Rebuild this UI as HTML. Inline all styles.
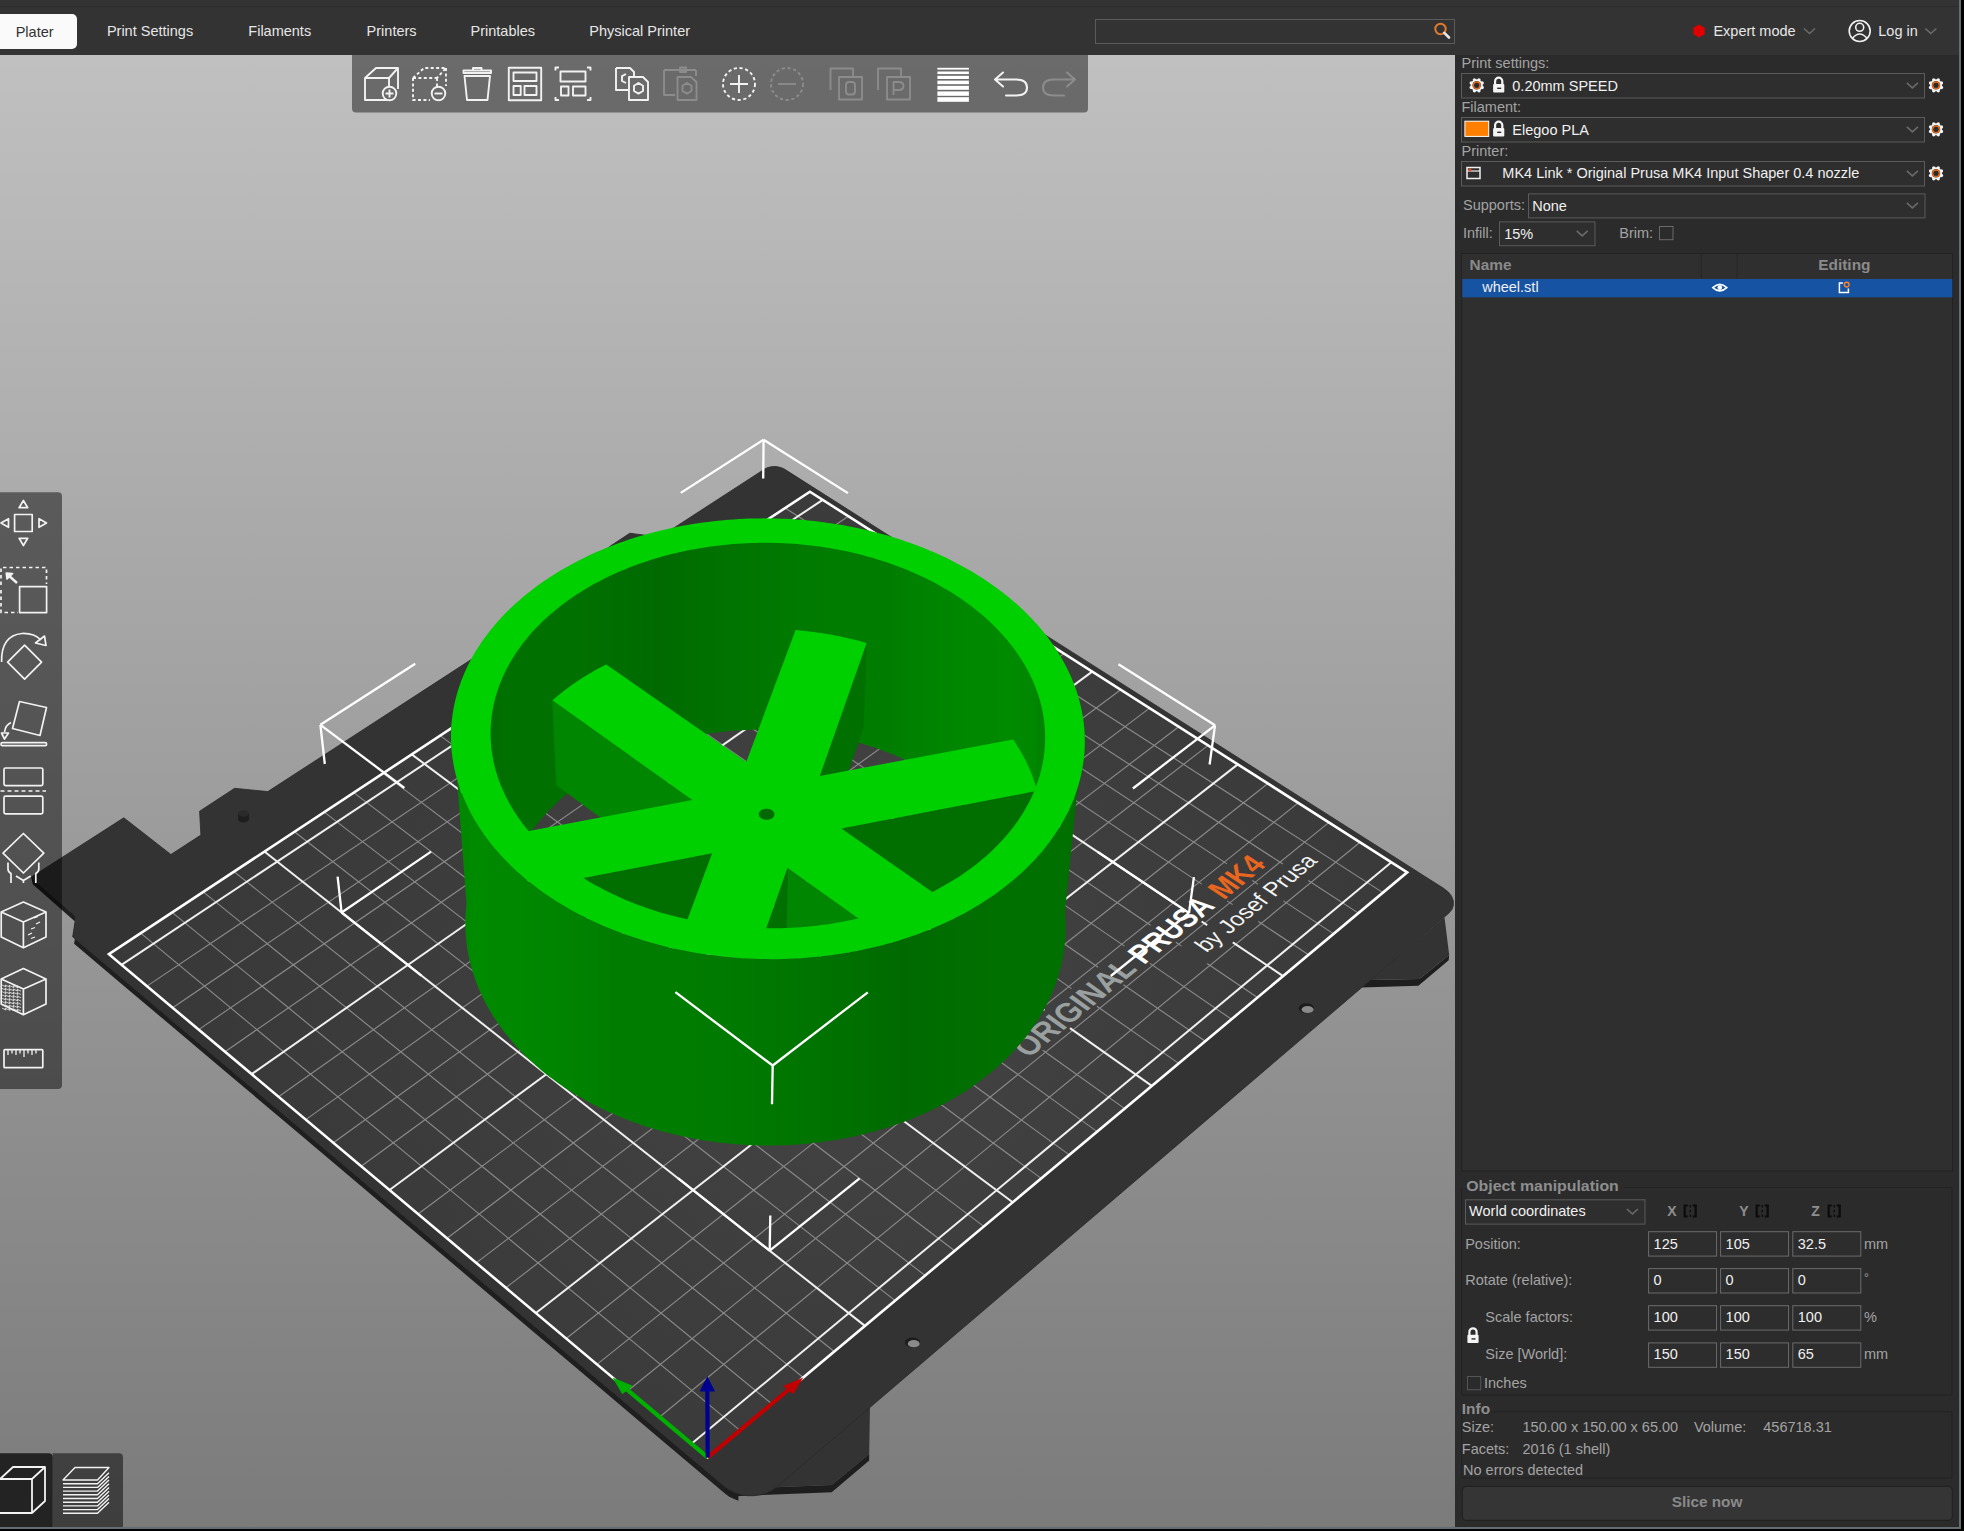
<!DOCTYPE html>
<html><head><meta charset="utf-8"><style>
html,body{margin:0;padding:0}
body{width:1964px;height:1531px;overflow:hidden;position:relative;background:#2b2b2b;font-family:"Liberation Sans",sans-serif}
</style></head><body>
<svg width="1455" height="1472" viewBox="0 55 1455 1472" style="position:absolute;left:0;top:55px">
<defs><linearGradient id="bg" x1="0" y1="0" x2="0" y2="1"><stop offset="0" stop-color="#c0c0c0"/><stop offset="1" stop-color="#7b7b7b"/></linearGradient></defs>
<rect x="0" y="55" width="1455" height="1472" fill="url(#bg)"/>
<polygon points="1361,987.4 1418.4,985.8 1448.7,960.2 1449.2,955 1419.4,979 1370.3,980" fill="#1e1e1e"/>
<polygon points="1444.5,917.3 1449.2,955 1419.4,979 1370.3,980 1360.9,987.7" fill="#333333"/>
<polygon points="870,1405.2 869.2,1454 831.7,1485 729.1,1489.1 735,1475 790,1440" fill="#333333"/>
<polygon points="31.2,877.2 75.9,916.5 72.7,936.7 72.7,936.7 125.0,980.8 178.6,1025.9 233.4,1072.2 289.6,1119.6 347.2,1168.1 406.2,1217.9 466.7,1268.9 528.7,1321.2 592.4,1374.9 657.8,1430.1 724.9,1486.6 724.9,1486.6 729.0,1489.6 733.5,1492.0 738.4,1493.9 738.4,1500.7 733.5,1498.8 728.9,1496.4 724.9,1493.4 724.9,1493.4 657.9,1436.9 592.7,1381.8 529.2,1328.2 467.3,1275.9 406.9,1224.9 348.0,1175.1 290.6,1126.6 234.5,1079.2 179.8,1033.0 126.3,987.9 74.1,943.8 74.1,943.8 77.3,923.6 32.7,884.3" fill="#1f1f1f"/>
<polygon points="729.1,1496.4 831.7,1492.3 869.2,1460.6 869.2,1454 831.7,1485 729.1,1489.1" fill="#1e1e1e"/>
<polygon points="724.9,1486.6 729.8,1490.1 735.4,1492.9 741.5,1494.7 747.8,1495.7 754.3,1495.7 760.6,1494.7 766.6,1492.9 772.2,1490.2 777.1,1486.7 1448.8,913.2 1451.9,909.5 1453.4,905.3 1453.3,900.8 1451.6,896.3 1448.4,892.1 1443.9,888.5 784.4,469.1 780.8,467.5 776.6,466.6 772.2,466.6 768.0,467.5 764.5,469.1 658.8,537.7 644.9,535.2 629.8,533.2 608.8,547.1 618.7,563.8 267.8,791.6 234.6,788.3 199.6,811.2 200.9,835.0 170.9,854.5 123.8,817.8 31.2,877.2 75.9,916.5 72.7,936.7" fill="#333333" stroke="#2a2a2a" stroke-width="0.8"/>
<defs><radialGradient id="pag" gradientUnits="userSpaceOnUse" cx="830" cy="980" r="620"><stop offset="0" stop-color="#454545"/><stop offset="0.55" stop-color="#3d3d3d"/><stop offset="1" stop-color="#393939"/></radialGradient></defs>
<polygon points="707.7,1457.4 1407.2,872.3 809.9,491.7 108.9,954.2" fill="url(#pag)"/>
<g><line x1="739.9" y1="1430.4" x2="140.7" y2="933.2" stroke="#8c8c8c" stroke-width="1.10"/><line x1="771.7" y1="1403.8" x2="172.1" y2="912.4" stroke="#8c8c8c" stroke-width="1.10"/><line x1="803.2" y1="1377.5" x2="203.2" y2="891.9" stroke="#8c8c8c" stroke-width="1.10"/><line x1="834.2" y1="1351.5" x2="234.0" y2="871.6" stroke="#8c8c8c" stroke-width="1.10"/><line x1="895.2" y1="1300.6" x2="294.5" y2="831.7" stroke="#8c8c8c" stroke-width="1.10"/><line x1="925.1" y1="1275.5" x2="324.3" y2="812.1" stroke="#8c8c8c" stroke-width="1.10"/><line x1="954.6" y1="1250.8" x2="353.7" y2="792.6" stroke="#8c8c8c" stroke-width="1.10"/><line x1="983.8" y1="1226.4" x2="382.9" y2="773.4" stroke="#8c8c8c" stroke-width="1.10"/><line x1="1041.2" y1="1178.4" x2="440.2" y2="735.6" stroke="#8c8c8c" stroke-width="1.10"/><line x1="1069.3" y1="1154.9" x2="468.4" y2="717.0" stroke="#8c8c8c" stroke-width="1.10"/><line x1="1097.2" y1="1131.6" x2="496.3" y2="698.6" stroke="#8c8c8c" stroke-width="1.10"/><line x1="1124.7" y1="1108.6" x2="1042.7" y2="1050.2" stroke="#8c8c8c" stroke-width="1.10"/><line x1="1017.3" y1="1032.0" x2="524.0" y2="680.3" stroke="#8c8c8c" stroke-width="1.10"/><line x1="1178.7" y1="1063.4" x2="1096.9" y2="1006.3" stroke="#8c8c8c" stroke-width="1.10"/><line x1="1071.5" y1="988.6" x2="578.4" y2="644.4" stroke="#8c8c8c" stroke-width="1.10"/><line x1="1205.3" y1="1041.2" x2="1123.5" y2="984.7" stroke="#8c8c8c" stroke-width="1.10"/><line x1="1098.1" y1="967.2" x2="605.2" y2="626.8" stroke="#8c8c8c" stroke-width="1.10"/><line x1="1231.5" y1="1019.2" x2="1149.9" y2="963.4" stroke="#8c8c8c" stroke-width="1.10"/><line x1="1124.5" y1="946.1" x2="631.7" y2="609.3" stroke="#8c8c8c" stroke-width="1.10"/><line x1="1257.5" y1="997.5" x2="1207.1" y2="963.5" stroke="#8c8c8c" stroke-width="1.10"/><line x1="1150.6" y1="925.2" x2="657.9" y2="592.0" stroke="#8c8c8c" stroke-width="1.10"/><line x1="1181.5" y1="946.1" x2="1175.9" y2="942.3" stroke="#8c8c8c" stroke-width="1.10"/><line x1="1308.5" y1="954.8" x2="1258.3" y2="921.5" stroke="#8c8c8c" stroke-width="1.10"/><line x1="1201.8" y1="884.1" x2="709.6" y2="557.9" stroke="#8c8c8c" stroke-width="1.10"/><line x1="1232.7" y1="904.6" x2="1227.1" y2="900.9" stroke="#8c8c8c" stroke-width="1.10"/><line x1="1333.6" y1="933.9" x2="1283.4" y2="900.9" stroke="#8c8c8c" stroke-width="1.10"/><line x1="1227.0" y1="863.9" x2="735.0" y2="541.1" stroke="#8c8c8c" stroke-width="1.10"/><line x1="1257.9" y1="884.2" x2="1252.3" y2="880.5" stroke="#8c8c8c" stroke-width="1.10"/><line x1="1358.4" y1="913.1" x2="1308.3" y2="880.5" stroke="#8c8c8c" stroke-width="1.10"/><line x1="1282.8" y1="864.0" x2="760.2" y2="524.5" stroke="#8c8c8c" stroke-width="1.10"/><line x1="1382.9" y1="892.6" x2="785.2" y2="508.0" stroke="#8c8c8c" stroke-width="1.10"/><line x1="659.6" y1="1417.0" x2="1360.0" y2="842.2" stroke="#8c8c8c" stroke-width="1.10"/><line x1="628.1" y1="1390.5" x2="1329.0" y2="822.4" stroke="#8c8c8c" stroke-width="1.10"/><line x1="597.0" y1="1364.4" x2="1298.2" y2="802.9" stroke="#8c8c8c" stroke-width="1.10"/><line x1="566.2" y1="1338.5" x2="1267.9" y2="783.5" stroke="#8c8c8c" stroke-width="1.10"/><line x1="505.9" y1="1287.8" x2="1208.1" y2="745.4" stroke="#8c8c8c" stroke-width="1.10"/><line x1="476.2" y1="1262.9" x2="1178.7" y2="726.7" stroke="#8c8c8c" stroke-width="1.10"/><line x1="447.0" y1="1238.3" x2="1149.6" y2="708.1" stroke="#8c8c8c" stroke-width="1.10"/><line x1="418.1" y1="1214.0" x2="1120.7" y2="689.8" stroke="#8c8c8c" stroke-width="1.10"/><line x1="361.2" y1="1166.3" x2="1064.0" y2="653.6" stroke="#8c8c8c" stroke-width="1.10"/><line x1="333.3" y1="1142.8" x2="1036.1" y2="635.9" stroke="#8c8c8c" stroke-width="1.10"/><line x1="305.8" y1="1119.6" x2="1008.5" y2="618.3" stroke="#8c8c8c" stroke-width="1.10"/><line x1="278.5" y1="1096.7" x2="981.1" y2="600.8" stroke="#8c8c8c" stroke-width="1.10"/><line x1="225.0" y1="1051.7" x2="927.2" y2="566.5" stroke="#8c8c8c" stroke-width="1.10"/><line x1="198.7" y1="1029.6" x2="900.7" y2="549.6" stroke="#8c8c8c" stroke-width="1.10"/><line x1="172.6" y1="1007.7" x2="874.4" y2="532.8" stroke="#8c8c8c" stroke-width="1.10"/><line x1="146.9" y1="986.1" x2="848.4" y2="516.3" stroke="#8c8c8c" stroke-width="1.10"/></g>
<g><line x1="864.9" y1="1325.9" x2="264.4" y2="851.5" stroke="#f0f0f0" stroke-width="2.00"/><line x1="1012.7" y1="1202.3" x2="411.7" y2="754.4" stroke="#f0f0f0" stroke-width="2.00"/><line x1="1151.8" y1="1085.9" x2="1070.0" y2="1028.1" stroke="#f0f0f0" stroke-width="2.00"/><line x1="1044.5" y1="1010.2" x2="551.3" y2="662.3" stroke="#f0f0f0" stroke-width="2.00"/><line x1="1283.1" y1="976.1" x2="1232.8" y2="942.4" stroke="#f0f0f0" stroke-width="2.00"/><line x1="1176.3" y1="904.6" x2="683.9" y2="574.9" stroke="#f0f0f0" stroke-width="2.00"/><line x1="1207.2" y1="925.2" x2="1201.6" y2="921.5" stroke="#f0f0f0" stroke-width="2.00"/><line x1="691.5" y1="1443.8" x2="1391.4" y2="862.2" stroke="#f0f0f0" stroke-width="2.00"/><line x1="535.9" y1="1313.0" x2="1237.8" y2="764.4" stroke="#f0f0f0" stroke-width="2.00"/><line x1="389.5" y1="1190.0" x2="1092.2" y2="671.6" stroke="#f0f0f0" stroke-width="2.00"/><line x1="251.6" y1="1074.1" x2="954.0" y2="583.6" stroke="#f0f0f0" stroke-width="2.00"/><line x1="121.5" y1="964.8" x2="822.7" y2="499.9" stroke="#f0f0f0" stroke-width="2.00"/></g>
<polygon points="707.7,1457.4 1407.2,872.3 809.9,491.7 108.9,954.2" fill="none" stroke="#ffffff" stroke-width="2.6" stroke-linejoin="miter"/>
<g transform="matrix(2.7532,-2.2272,3.1170,2.2330,1028.44,1058.41)"><text x="0" y="0" font-size="8.50" font-weight="bold" fill="#9aa09f" textLength="39.90" lengthAdjust="spacingAndGlyphs">ORIGINAL</text></g>
<g transform="matrix(2.6212,-2.1204,3.1065,2.1260,1144.02,964.91)"><text x="0" y="0" font-size="8.50" font-weight="bold" fill="#ffffff" textLength="27.50" lengthAdjust="spacingAndGlyphs">PRUSA</text></g>
<g transform="matrix(2.5318,-2.0481,3.0973,2.0536,1223.92,900.27)"><text x="0" y="0" font-size="8.50" font-weight="bold" fill="#e8661f" textLength="17.10" lengthAdjust="spacingAndGlyphs">MK4</text></g>
<g transform="matrix(2.5777,-2.1071,3.1319,2.1127,1206.62,953.09)"><text x="0" y="0" font-size="6.20" font-weight="normal" fill="#f4f4f4" textLength="43.40" lengthAdjust="spacingAndGlyphs">by Josef Prusa</text></g>
<ellipse cx="243.5" cy="819" rx="5.5" ry="3.4" fill="#1e1e1e"/><rect x="238" y="813.5" width="11" height="5.5" fill="#1e1e1e"/><ellipse cx="243.5" cy="813.5" rx="5.5" ry="3.2" fill="#2a2a2a"/>
<ellipse cx="1306.4" cy="1008.3" rx="7.6" ry="5" fill="#1c1c1c"/><ellipse cx="1307.6" cy="1009.5" rx="6" ry="3.6" fill="#8a8a8a"/>
<ellipse cx="912.5" cy="1342.5" rx="7.6" ry="5" fill="#1c1c1c"/><ellipse cx="913.7" cy="1343.7" rx="6" ry="3.6" fill="#8a8a8a"/>
<line x1="707.7" y1="1457.4" x2="625.0" y2="1387.9" stroke="#00b000" stroke-width="4.20"/>
<polygon points="612.5,1377.4 622.3,1394.2 632.7,1385.8" fill="#00b000"/>
<line x1="707.7" y1="1457.4" x2="790.6" y2="1388.0" stroke="#c00000" stroke-width="4.20"/>
<polygon points="803.2,1377.5 793.3,1394.3 783.0,1385.9" fill="#c00000"/>
<line x1="707.7" y1="1457.4" x2="707.3" y2="1390.1" stroke="#000090" stroke-width="4.20"/>
<polygon points="707.3,1376.2 699.7,1391.4 715.0,1391.5" fill="#000090"/>
<defs><clipPath id="opening"><path d="M955.29,593.63 L951.80,591.44 L948.26,589.29 L944.68,587.19 L941.05,585.12 L937.37,583.10 L933.64,581.13 L929.88,579.19 L926.06,577.31 L922.21,575.47 L918.32,573.67 L914.38,571.92 L910.41,570.21 L906.40,568.56 L902.36,566.95 L898.27,565.38 L894.16,563.87 L890.01,562.40 L885.83,560.98 L881.62,559.61 L877.37,558.29 L873.10,557.02 L868.81,555.80 L864.48,554.63 L860.13,553.51 L855.76,552.44 L851.37,551.41 L846.95,550.45 L842.51,549.53 L838.05,548.66 L833.58,547.84 L829.09,547.08 L824.58,546.37 L820.06,545.71 L815.52,545.10 L810.97,544.54 L806.41,544.04 L801.85,543.59 L797.27,543.19 L792.68,542.84 L788.09,542.55 L783.50,542.31 L778.89,542.12 L774.29,541.99 L769.69,541.90 L765.08,541.87 L760.48,541.90 L755.87,541.97 L751.27,542.10 L746.68,542.29 L742.09,542.52 L737.51,542.81 L732.93,543.15 L728.36,543.54 L723.81,543.99 L719.26,544.49 L714.73,545.04 L710.21,545.64 L705.71,546.29 L701.22,547.00 L696.75,547.76 L692.30,548.57 L687.87,549.43 L683.46,550.34 L679.07,551.31 L674.70,552.32 L670.36,553.39 L666.04,554.50 L661.75,555.67 L657.49,556.89 L653.26,558.15 L649.05,559.47 L644.88,560.83 L640.74,562.25 L636.63,563.71 L632.56,565.22 L628.52,566.78 L624.52,568.38 L620.56,570.03 L616.64,571.73 L612.76,573.48 L608.91,575.27 L605.11,577.11 L601.36,578.99 L597.64,580.92 L593.98,582.89 L590.36,584.91 L586.78,586.97 L583.26,589.07 L579.79,591.21 L576.36,593.40 L572.99,595.63 L569.67,597.90 L566.40,600.21 L563.19,602.56 L560.04,604.95 L556.94,607.37 L553.90,609.84 L550.91,612.34 L547.99,614.88 L545.13,617.46 L542.33,620.07 L539.59,622.72 L536.91,625.40 L534.30,628.12 L531.76,630.87 L529.28,633.65 L526.86,636.46 L524.52,639.30 L522.24,642.18 L520.03,645.08 L517.89,648.01 L515.83,650.97 L513.83,653.96 L511.91,656.98 L510.06,660.01 L508.28,663.08 L506.58,666.17 L504.95,669.28 L503.40,672.41 L501.93,675.57 L500.53,678.74 L499.21,681.94 L497.97,685.15 L496.81,688.39 L495.73,691.64 L494.73,694.90 L493.80,698.18 L492.96,701.48 L492.21,704.79 L491.53,708.11 L490.94,711.44 L490.43,714.78 L490.00,718.14 L489.65,721.50 L489.39,724.87 L489.22,728.24 L489.13,731.62 L489.12,735.01 L489.20,738.39 L489.37,741.78 L489.62,745.18 L489.95,748.57 L490.38,751.96 L490.88,755.35 L491.48,758.74 L492.16,762.12 L492.93,765.50 L493.78,768.87 L494.72,772.24 L495.74,775.59 L496.85,778.94 L498.05,782.28 L499.33,785.60 L500.70,788.92 L502.16,792.22 L503.70,795.50 L505.32,798.77 L507.03,802.02 L508.82,805.25 L510.70,808.47 L512.66,811.66 L514.70,814.83 L516.83,817.98 L519.04,821.11 L521.33,824.21 L523.70,827.28 L526.15,830.33 L528.68,833.35 L531.30,836.35 L533.99,839.31 L536.75,842.24 L539.60,845.13 L542.52,848.00 L545.52,850.83 L548.59,853.63 L551.74,856.38 L554.95,859.11 L558.25,861.79 L561.61,864.43 L565.04,867.03 L568.54,869.60 L572.11,872.12 L575.75,874.59 L579.45,877.02 L583.22,879.41 L587.05,881.75 L590.94,884.05 L594.89,886.29 L598.91,888.49 L602.98,890.64 L607.11,892.73 L611.29,894.78 L615.53,896.77 L619.83,898.71 L624.17,900.60 L628.57,902.44 L633.01,904.21 L637.50,905.94 L642.04,907.60 L646.62,909.21 L651.25,910.76 L655.91,912.26 L660.62,913.69 L665.36,915.07 L670.14,916.38 L674.95,917.64 L679.80,918.83 L684.68,919.96 L689.58,921.03 L694.52,922.04 L699.48,922.98 L704.47,923.86 L709.48,924.68 L714.51,925.44 L719.55,926.13 L724.62,926.75 L729.70,927.31 L734.80,927.81 L739.90,928.23 L745.02,928.60 L750.15,928.90 L755.28,929.13 L760.41,929.30 L765.55,929.40 L770.69,929.44 L775.83,929.41 L780.97,929.31 L786.10,929.15 L791.22,928.92 L796.34,928.63 L801.45,928.27 L806.54,927.85 L811.62,927.36 L816.69,926.80 L821.73,926.18 L826.76,925.50 L831.77,924.75 L836.75,923.94 L841.71,923.06 L846.65,922.13 L851.56,921.12 L856.43,920.06 L861.28,918.93 L866.09,917.75 L870.87,916.50 L875.61,915.19 L880.31,913.82 L884.97,912.39 L889.60,910.90 L894.17,909.36 L898.71,907.75 L903.20,906.09 L907.64,904.37 L912.03,902.60 L916.37,900.77 L920.66,898.89 L924.90,896.95 L929.08,894.96 L933.21,892.92 L937.28,890.83 L941.29,888.69 L945.24,886.49 L949.13,884.25 L952.95,881.96 L956.71,879.63 L960.41,877.24 L964.04,874.82 L967.61,872.34 L971.10,869.83 L974.53,867.27 L977.89,864.67 L981.17,862.03 L984.38,859.35 L987.52,856.64 L990.59,853.88 L993.58,851.09 L996.50,848.26 L999.33,845.40 L1002.09,842.51 L1004.78,839.58 L1007.38,836.62 L1009.91,833.63 L1012.35,830.62 L1014.71,827.57 L1017.00,824.50 L1019.20,821.40 L1021.31,818.28 L1023.35,815.13 L1025.30,811.96 L1027.17,808.77 L1028.95,805.56 L1030.65,802.33 L1032.27,799.08 L1033.80,795.81 L1035.24,792.53 L1036.60,789.23 L1037.87,785.92 L1039.06,782.60 L1040.16,779.26 L1041.17,775.92 L1042.10,772.56 L1042.94,769.20 L1043.70,765.83 L1044.36,762.45 L1044.95,759.07 L1045.44,755.68 L1045.85,752.29 L1046.18,748.90 L1046.42,745.51 L1046.57,742.12 L1046.63,738.73 L1046.62,735.34 L1046.51,731.95 L1046.32,728.57 L1046.05,725.20 L1045.69,721.83 L1045.25,718.47 L1044.73,715.12 L1044.12,711.77 L1043.43,708.44 L1042.66,705.12 L1041.80,701.81 L1040.87,698.51 L1039.85,695.23 L1038.76,691.96 L1037.58,688.71 L1036.33,685.48 L1034.99,682.26 L1033.58,679.07 L1032.09,675.89 L1030.53,672.73 L1028.89,669.60 L1027.17,666.48 L1025.38,663.39 L1023.51,660.33 L1021.58,657.28 L1019.57,654.27 L1017.48,651.28 L1015.33,648.32 L1013.11,645.38 L1010.82,642.47 L1008.46,639.60 L1006.03,636.75 L1003.53,633.94 L1000.97,631.15 L998.35,628.40 L995.66,625.68 L992.90,623.00 L990.09,620.35 L987.21,617.73 L984.28,615.15 L981.28,612.61 L978.22,610.10 L975.11,607.63 L971.94,605.20 L968.72,602.81 L965.44,600.45 L962.11,598.14 L958.72,595.87Z"/></clipPath><linearGradient id="gin" gradientUnits="userSpaceOnUse" x1="496.0" y1="0" x2="1037.5" y2="0"><stop offset="0.0000" stop-color="#006d00"/><stop offset="0.0014" stop-color="#006d00"/><stop offset="0.0034" stop-color="#006e00"/><stop offset="0.0061" stop-color="#006e00"/><stop offset="0.0093" stop-color="#006f00"/><stop offset="0.0131" stop-color="#006f00"/><stop offset="0.0175" stop-color="#007000"/><stop offset="0.0225" stop-color="#007000"/><stop offset="0.0280" stop-color="#007000"/><stop offset="0.0342" stop-color="#007100"/><stop offset="0.0408" stop-color="#007100"/><stop offset="0.0480" stop-color="#007100"/><stop offset="0.0557" stop-color="#007100"/><stop offset="0.0639" stop-color="#007100"/><stop offset="0.0727" stop-color="#007100"/><stop offset="0.0819" stop-color="#007100"/><stop offset="0.0916" stop-color="#007100"/><stop offset="0.1018" stop-color="#007100"/><stop offset="0.1124" stop-color="#007100"/><stop offset="0.1234" stop-color="#007000"/><stop offset="0.1349" stop-color="#007000"/><stop offset="0.1468" stop-color="#007000"/><stop offset="0.1590" stop-color="#007000"/><stop offset="0.1717" stop-color="#006f00"/><stop offset="0.1847" stop-color="#006f00"/><stop offset="0.1980" stop-color="#006e00"/><stop offset="0.2117" stop-color="#006e00"/><stop offset="0.2257" stop-color="#006d00"/><stop offset="0.2400" stop-color="#006d00"/><stop offset="0.2546" stop-color="#006c00"/><stop offset="0.2694" stop-color="#006b00"/><stop offset="0.2845" stop-color="#006b00"/><stop offset="0.2999" stop-color="#006a00"/><stop offset="0.3154" stop-color="#006b00"/><stop offset="0.3311" stop-color="#006c00"/><stop offset="0.3470" stop-color="#006d00"/><stop offset="0.3631" stop-color="#006f00"/><stop offset="0.3793" stop-color="#007000"/><stop offset="0.3957" stop-color="#007100"/><stop offset="0.4121" stop-color="#007200"/><stop offset="0.4287" stop-color="#007300"/><stop offset="0.4453" stop-color="#007400"/><stop offset="0.4620" stop-color="#007500"/><stop offset="0.4787" stop-color="#007600"/><stop offset="0.4955" stop-color="#007700"/><stop offset="0.5123" stop-color="#007800"/><stop offset="0.5290" stop-color="#007900"/><stop offset="0.5457" stop-color="#007900"/><stop offset="0.5624" stop-color="#007a00"/><stop offset="0.5790" stop-color="#007a00"/><stop offset="0.5955" stop-color="#007b00"/><stop offset="0.6119" stop-color="#007c00"/><stop offset="0.6282" stop-color="#007c00"/><stop offset="0.6443" stop-color="#007c00"/><stop offset="0.6603" stop-color="#007d00"/><stop offset="0.6762" stop-color="#007d00"/><stop offset="0.6918" stop-color="#007d00"/><stop offset="0.7073" stop-color="#007d00"/><stop offset="0.7225" stop-color="#007d00"/><stop offset="0.7375" stop-color="#007e00"/><stop offset="0.7522" stop-color="#007f00"/><stop offset="0.7666" stop-color="#008100"/><stop offset="0.7808" stop-color="#008200"/><stop offset="0.7946" stop-color="#008300"/><stop offset="0.8082" stop-color="#008400"/><stop offset="0.8214" stop-color="#008500"/><stop offset="0.8342" stop-color="#008500"/><stop offset="0.8467" stop-color="#008600"/><stop offset="0.8587" stop-color="#008700"/><stop offset="0.8704" stop-color="#008800"/><stop offset="0.8817" stop-color="#008800"/><stop offset="0.8925" stop-color="#008900"/><stop offset="0.9029" stop-color="#008900"/><stop offset="0.9129" stop-color="#008900"/><stop offset="0.9223" stop-color="#008900"/><stop offset="0.9313" stop-color="#008a00"/><stop offset="0.9398" stop-color="#008a00"/><stop offset="0.9478" stop-color="#008a00"/><stop offset="0.9552" stop-color="#008a00"/><stop offset="0.9622" stop-color="#008a00"/><stop offset="0.9685" stop-color="#008900"/><stop offset="0.9744" stop-color="#008900"/><stop offset="0.9796" stop-color="#008900"/><stop offset="0.9843" stop-color="#008800"/><stop offset="0.9884" stop-color="#008800"/><stop offset="0.9920" stop-color="#008700"/><stop offset="0.9949" stop-color="#008700"/><stop offset="0.9972" stop-color="#008600"/><stop offset="0.9989" stop-color="#008500"/><stop offset="1.0000" stop-color="#008400"/></linearGradient><linearGradient id="gout" gradientUnits="userSpaceOnUse" x1="458.4" y1="0" x2="1074.9" y2="0"><stop offset="0.0000" stop-color="#008600"/><stop offset="0.0003" stop-color="#008500"/><stop offset="0.0003" stop-color="#008700"/><stop offset="0.0012" stop-color="#008400"/><stop offset="0.0013" stop-color="#008700"/><stop offset="0.0029" stop-color="#008800"/><stop offset="0.0051" stop-color="#008800"/><stop offset="0.0079" stop-color="#008900"/><stop offset="0.0114" stop-color="#008900"/><stop offset="0.0155" stop-color="#008900"/><stop offset="0.0203" stop-color="#008a00"/><stop offset="0.0257" stop-color="#008a00"/><stop offset="0.0317" stop-color="#008a00"/><stop offset="0.0383" stop-color="#008a00"/><stop offset="0.0456" stop-color="#008a00"/><stop offset="0.0535" stop-color="#008900"/><stop offset="0.0619" stop-color="#008900"/><stop offset="0.0710" stop-color="#008900"/><stop offset="0.0806" stop-color="#008900"/><stop offset="0.0909" stop-color="#008800"/><stop offset="0.1017" stop-color="#008800"/><stop offset="0.1130" stop-color="#008700"/><stop offset="0.1249" stop-color="#008600"/><stop offset="0.1373" stop-color="#008500"/><stop offset="0.1502" stop-color="#008500"/><stop offset="0.1637" stop-color="#008400"/><stop offset="0.1776" stop-color="#008300"/><stop offset="0.1919" stop-color="#008200"/><stop offset="0.2067" stop-color="#008100"/><stop offset="0.2220" stop-color="#007f00"/><stop offset="0.2376" stop-color="#007e00"/><stop offset="0.2536" stop-color="#007d00"/><stop offset="0.2700" stop-color="#007d00"/><stop offset="0.2867" stop-color="#007d00"/><stop offset="0.3037" stop-color="#007d00"/><stop offset="0.3210" stop-color="#007d00"/><stop offset="0.3386" stop-color="#007c00"/><stop offset="0.3564" stop-color="#007c00"/><stop offset="0.3744" stop-color="#007c00"/><stop offset="0.3926" stop-color="#007b00"/><stop offset="0.4110" stop-color="#007a00"/><stop offset="0.4295" stop-color="#007a00"/><stop offset="0.4481" stop-color="#007900"/><stop offset="0.4668" stop-color="#007900"/><stop offset="0.4855" stop-color="#007800"/><stop offset="0.5042" stop-color="#007700"/><stop offset="0.5230" stop-color="#007600"/><stop offset="0.5417" stop-color="#007500"/><stop offset="0.5604" stop-color="#007400"/><stop offset="0.5789" stop-color="#007300"/><stop offset="0.5974" stop-color="#007200"/><stop offset="0.6157" stop-color="#007100"/><stop offset="0.6338" stop-color="#007000"/><stop offset="0.6517" stop-color="#006f00"/><stop offset="0.6694" stop-color="#006d00"/><stop offset="0.6869" stop-color="#006c00"/><stop offset="0.7041" stop-color="#006b00"/><stop offset="0.7210" stop-color="#006a00"/><stop offset="0.7375" stop-color="#006b00"/><stop offset="0.7538" stop-color="#006b00"/><stop offset="0.7696" stop-color="#006c00"/><stop offset="0.7851" stop-color="#006d00"/><stop offset="0.8001" stop-color="#006d00"/><stop offset="0.8147" stop-color="#006e00"/><stop offset="0.8289" stop-color="#006e00"/><stop offset="0.8426" stop-color="#006f00"/><stop offset="0.8558" stop-color="#006f00"/><stop offset="0.8685" stop-color="#007000"/><stop offset="0.8807" stop-color="#007000"/><stop offset="0.8923" stop-color="#007000"/><stop offset="0.9034" stop-color="#007000"/><stop offset="0.9140" stop-color="#007100"/><stop offset="0.9240" stop-color="#007100"/><stop offset="0.9334" stop-color="#007100"/><stop offset="0.9422" stop-color="#007100"/><stop offset="0.9504" stop-color="#007100"/><stop offset="0.9579" stop-color="#007100"/><stop offset="0.9649" stop-color="#007100"/><stop offset="0.9713" stop-color="#007100"/><stop offset="0.9770" stop-color="#007100"/><stop offset="0.9821" stop-color="#007100"/><stop offset="0.9865" stop-color="#007000"/><stop offset="0.9904" stop-color="#007000"/><stop offset="0.9936" stop-color="#007000"/><stop offset="0.9961" stop-color="#006f00"/><stop offset="0.9980" stop-color="#006f00"/><stop offset="0.9993" stop-color="#006e00"/><stop offset="0.9994" stop-color="#006d00"/><stop offset="1.0000" stop-color="#006e00"/><stop offset="1.0000" stop-color="#006d00"/></linearGradient></defs>
<g clip-path="url(#opening)">
<path d="M1046.92,735.52 L1046.90,732.35 L1046.80,729.19 L1046.64,726.04 L1046.40,722.89 L1046.08,719.74 L1045.70,716.60 L1045.24,713.47 L1044.70,710.35 L1044.10,707.23 L1043.42,704.12 L1042.67,701.03 L1041.85,697.94 L1040.96,694.87 L1040.00,691.81 L1038.97,688.76 L1037.87,685.73 L1036.70,682.71 L1035.47,679.70 L1034.16,676.72 L1032.79,673.75 L1031.35,670.79 L1029.85,667.86 L1028.27,664.94 L1026.64,662.05 L1024.93,659.17 L1023.17,656.32 L1021.34,653.49 L1019.45,650.68 L1017.49,647.89 L1015.48,645.13 L1013.40,642.39 L1011.26,639.68 L1009.06,636.99 L1006.81,634.33 L1004.49,631.69 L1002.12,629.09 L999.69,626.51 L997.21,623.95 L994.66,621.43 L992.07,618.94 L989.42,616.48 L986.72,614.04 L983.96,611.64 L981.15,609.28 L978.30,606.94 L975.39,604.63 L972.43,602.36 L969.43,600.13 L966.37,597.92 L963.27,595.75 L960.12,593.62 L956.93,591.52 L953.70,589.46 L950.42,587.43 L947.10,585.44 L943.73,583.49 L940.33,581.58 L936.88,579.70 L933.40,577.86 L929.87,576.06 L926.31,574.30 L922.72,572.58 L919.08,570.90 L915.42,569.26 L911.71,567.65 L907.98,566.09 L904.21,564.57 L900.42,563.09 L896.59,561.66 L892.73,560.26 L888.84,558.91 L884.93,557.60 L880.99,556.33 L877.02,555.10 L873.03,553.92 L869.02,552.78 L864.98,551.69 L860.92,550.63 L856.84,549.62 L852.74,548.66 L848.62,547.74 L844.48,546.86 L840.33,546.03 L836.16,545.25 L831.97,544.51 L827.77,543.81 L823.56,543.16 L819.33,542.55 L815.09,541.99 L810.84,541.48 L806.58,541.01 L802.32,540.58 L798.04,540.21 L793.76,539.87 L789.47,539.59 L785.18,539.35 L780.88,539.15 L776.58,539.00 L772.28,538.90 L767.98,538.84 L763.68,538.83 L759.38,538.87 L755.08,538.95 L750.78,539.08 L746.49,539.25 L742.21,539.47 L737.92,539.74 L733.65,540.05 L729.38,540.41 L725.12,540.81 L720.88,541.26 L716.64,541.76 L712.41,542.30 L708.20,542.88 L704.00,543.51 L699.81,544.19 L695.64,544.91 L691.49,545.68 L687.35,546.49 L683.23,547.34 L679.13,548.24 L675.05,549.19 L670.99,550.18 L666.96,551.21 L662.94,552.29 L658.95,553.41 L654.99,554.57 L651.05,555.78 L647.13,557.02 L643.25,558.32 L639.39,559.65 L635.57,561.03 L631.77,562.45 L628.00,563.91 L624.27,565.41 L620.57,566.95 L616.90,568.54 L613.27,570.16 L609.67,571.82 L606.11,573.53 L602.59,575.27 L599.11,577.05 L595.66,578.88 L592.26,580.74 L588.89,582.63 L585.57,584.57 L582.29,586.54 L579.06,588.55 L575.86,590.60 L572.72,592.68 L569.62,594.80 L566.56,596.95 L563.56,599.14 L560.60,601.36 L557.69,603.62 L554.83,605.91 L552.03,608.23 L549.27,610.59 L546.57,612.97 L543.92,615.39 L541.32,617.84 L538.78,620.32 L536.29,622.83 L533.86,625.37 L531.49,627.94 L529.17,630.53 L526.91,633.16 L524.71,635.81 L522.57,638.48 L520.49,641.19 L518.48,643.92 L516.52,646.67 L514.62,649.44 L512.79,652.24 L511.02,655.07 L509.32,657.91 L507.68,660.78 L506.10,663.66 L504.59,666.57 L503.15,669.50 L501.77,672.44 L500.47,675.41 L499.22,678.39 L498.05,681.38 L496.95,684.40 L495.91,687.42 L494.95,690.47 L494.05,693.52 L493.23,696.59 L492.47,699.67 L491.79,702.76 L491.18,705.87 L490.64,708.98 L490.18,712.10 L489.78,715.23 L489.46,718.37 L489.21,721.51 L489.04,724.66 L488.94,727.81 L501.45,918.60 L501.54,915.45 L501.69,912.31 L501.92,909.18 L502.21,906.05 L502.57,902.92 L503.00,899.81 L503.50,896.70 L504.07,893.60 L504.70,890.52 L505.41,887.44 L506.18,884.38 L507.01,881.33 L507.92,878.29 L508.89,875.26 L509.92,872.25 L511.03,869.26 L512.19,866.28 L513.42,863.32 L514.72,860.38 L516.07,857.46 L517.49,854.55 L518.98,851.67 L520.52,848.80 L522.13,845.96 L523.80,843.13 L525.52,840.33 L527.31,837.56 L529.16,834.81 L531.06,832.08 L533.02,829.37 L535.04,826.70 L537.12,824.05 L539.25,821.42 L541.44,818.82 L543.68,816.25 L545.98,813.71 L548.33,811.20 L550.73,808.72 L553.19,806.27 L555.69,803.85 L558.25,801.46 L560.86,799.10 L563.51,796.78 L566.22,794.48 L568.97,792.22 L571.77,790.00 L574.61,787.81 L577.50,785.65 L580.44,783.53 L583.42,781.44 L586.44,779.39 L589.51,777.38 L592.61,775.40 L595.76,773.46 L598.95,771.56 L602.17,769.70 L605.43,767.87 L608.74,766.08 L612.07,764.34 L615.45,762.63 L618.86,760.96 L622.30,759.33 L625.77,757.74 L629.28,756.20 L632.82,754.69 L636.39,753.23 L639.99,751.81 L643.62,750.42 L647.28,749.09 L650.97,747.79 L654.68,746.54 L658.41,745.33 L662.17,744.16 L665.96,743.04 L669.77,741.96 L673.60,740.92 L677.45,739.93 L681.32,738.98 L685.21,738.08 L689.11,737.22 L693.04,736.41 L696.98,735.64 L700.94,734.91 L704.91,734.24 L708.90,733.60 L712.90,733.01 L716.91,732.47 L720.93,731.98 L724.96,731.53 L729.00,731.12 L733.05,730.76 L737.11,730.45 L741.17,730.18 L745.24,729.96 L749.31,729.79 L753.39,729.66 L757.47,729.58 L761.55,729.54 L765.63,729.55 L769.71,729.61 L773.80,729.71 L777.88,729.86 L781.95,730.05 L786.03,730.29 L790.09,730.58 L794.16,730.91 L798.21,731.29 L802.26,731.72 L806.30,732.19 L810.34,732.70 L814.36,733.27 L818.37,733.87 L822.37,734.53 L826.35,735.23 L830.32,735.97 L834.28,736.76 L838.22,737.59 L842.15,738.47 L846.05,739.39 L849.94,740.36 L853.81,741.37 L857.66,742.42 L861.49,743.52 L865.30,744.67 L869.08,745.85 L872.84,747.08 L876.58,748.35 L880.28,749.67 L883.97,751.02 L887.62,752.42 L891.25,753.86 L894.85,755.34 L898.42,756.87 L901.96,758.43 L905.47,760.04 L908.94,761.68 L912.38,763.37 L915.79,765.09 L919.16,766.86 L922.50,768.66 L925.79,770.50 L929.06,772.38 L932.28,774.30 L935.46,776.26 L938.61,778.25 L941.71,780.28 L944.77,782.35 L947.79,784.45 L950.77,786.58 L953.70,788.75 L956.59,790.96 L959.43,793.20 L962.22,795.47 L964.97,797.78 L967.67,800.12 L970.33,802.49 L972.93,804.90 L975.48,807.33 L977.98,809.79 L980.43,812.29 L982.83,814.81 L985.18,817.36 L987.47,819.95 L989.71,822.55 L991.89,825.19 L994.02,827.85 L996.09,830.54 L998.10,833.25 L1000.06,835.99 L1001.96,838.76 L1003.80,841.54 L1005.58,844.35 L1007.30,847.18 L1008.96,850.03 L1010.56,852.91 L1012.10,855.80 L1013.57,858.71 L1014.99,861.65 L1016.34,864.60 L1017.62,867.56 L1018.84,870.55 L1020.00,873.55 L1021.10,876.56 L1022.12,879.59 L1023.08,882.64 L1023.98,885.69 L1024.81,888.76 L1025.57,891.84 L1026.26,894.93 L1026.89,898.03 L1027.45,901.14 L1027.94,904.26 L1028.36,907.39 L1028.71,910.52 L1028.99,913.66 L1029.20,916.80 L1029.35,919.95 L1029.42,923.10 L1029.42,926.25Z" fill="url(#gin)"/>
<path d="M863.25,727.83 L817.47,860.83 L819.84,775.97 L866.63,642.95Z" fill="#007000" stroke="#007000" stroke-width="0.5"/>
<path d="M693.13,884.91 L556.47,785.20 L552.45,700.28 L692.42,800.06Z" fill="#008600" stroke="#008600" stroke-width="0.5"/>
<path d="M1029.42,875.71 L838.40,913.27 L841.33,828.48 L1037.09,790.86Z" fill="#006f00" stroke="#006f00" stroke-width="0.5"/>
<path d="M712.41,938.04 L514.78,976.90 L509.47,892.24 L712.17,853.29Z" fill="#006f00" stroke="#006f00" stroke-width="0.5"/>
<path d="M935.78,1061.94 L785.89,952.58 L787.52,867.86 L941.39,977.56Z" fill="#008600" stroke="#008600" stroke-width="0.5"/>
<path d="M785.89,952.58 L733.96,1103.44 L734.28,1019.23 L787.52,867.86Z" fill="#007000" stroke="#007000" stroke-width="0.5"/>
<path d="M746.25,762.11 L795.60,630.10 L795.81,630.12 L800.32,630.52 L804.84,630.98 L809.34,631.49 L813.83,632.05 L818.31,632.67 L822.77,633.34 L827.22,634.06 L831.66,634.83 L836.07,635.66 L840.47,636.54 L844.86,637.47 L849.22,638.45 L853.56,639.48 L857.87,640.57 L862.17,641.70 L866.43,642.89 L866.63,642.95 L819.84,775.97 L1013.01,739.43 L1013.11,739.57 L1015.16,742.60 L1017.14,745.65 L1019.05,748.73 L1020.89,751.83 L1022.65,754.96 L1024.34,758.11 L1025.96,761.28 L1027.50,764.48 L1028.96,767.70 L1030.35,770.93 L1031.66,774.19 L1032.90,777.46 L1034.05,780.75 L1035.13,784.05 L1036.13,787.37 L1037.05,790.71 L1037.09,790.86 L841.33,828.48 L995.09,935.80 L994.97,935.93 L992.16,938.82 L989.29,941.68 L986.33,944.50 L983.31,947.29 L980.21,950.03 L977.04,952.74 L973.79,955.41 L970.48,958.04 L967.10,960.62 L963.65,963.16 L960.13,965.66 L956.55,968.12 L952.90,970.52 L949.18,972.88 L945.41,975.20 L941.57,977.46 L941.39,977.56 L787.52,867.86 L734.28,1019.23 L734.04,1019.21 L729.02,1018.71 L724.01,1018.14 L719.01,1017.51 L714.04,1016.81 L709.08,1016.05 L704.14,1015.23 L699.22,1014.34 L694.33,1013.38 L689.47,1012.36 L684.63,1011.28 L679.82,1010.14 L675.04,1008.93 L670.29,1007.67 L665.58,1006.34 L660.90,1004.95 L656.26,1003.50 L656.05,1003.43 L712.17,853.29 L509.47,892.24 L509.39,892.09 L507.70,888.80 L506.10,885.50 L504.58,882.17 L503.14,878.84 L501.79,875.49 L500.52,872.13 L499.34,868.75 L498.24,865.37 L497.22,861.97 L496.30,858.57 L495.45,855.16 L494.69,851.74 L494.02,848.32 L493.43,844.89 L492.93,841.46 L492.51,838.03 L492.49,837.87 L692.42,800.06 L552.45,700.28 L552.59,700.17 L555.53,697.63 L558.53,695.13 L561.59,692.68 L564.70,690.26 L567.87,687.88 L571.10,685.54 L574.37,683.24 L577.70,680.98 L581.08,678.77 L584.51,676.60 L587.99,674.47 L591.51,672.38 L595.09,670.34 L598.71,668.34 L602.37,666.39 L606.08,664.48 L606.25,664.40Z" fill="#00cf00"/>
<path d="M772.05,810.29 L771.11,809.73 L770.06,809.27 L768.92,808.94 L767.73,808.73 L766.51,808.66 L765.29,808.73 L764.10,808.93 L762.97,809.27 L761.93,809.72 L761.01,810.28 L760.22,810.95 L759.59,811.69 L759.13,812.49 L758.86,813.34 L758.77,814.21 L758.88,815.08 L759.17,815.93 L759.65,816.74 L760.30,817.48 L761.11,818.15 L762.05,818.72 L763.10,819.17 L764.24,819.51 L765.43,819.71 L766.66,819.78 L767.88,819.71 L769.07,819.51 L770.20,819.18 L771.24,818.72 L772.17,818.15 L772.95,817.49 L773.58,816.74 L774.04,815.94 L774.31,815.09 L774.39,814.22 L774.28,813.35 L773.98,812.50 L773.50,811.70 L772.85,810.95Z" fill="#006a00"/>
</g>
<path d="M452.32,716.30 L451.97,719.21 L451.67,722.13 L451.42,725.05 L451.23,727.97 L451.10,730.90 L451.03,733.84 L451.01,736.77 L451.04,739.71 L451.13,742.66 L451.28,745.60 L451.49,748.54 L451.75,751.49 L452.07,754.43 L452.45,757.38 L452.88,760.32 L453.37,763.27 L453.92,766.21 L454.53,769.15 L455.19,772.08 L455.91,775.01 L456.69,777.94 L457.52,780.86 L458.41,783.78 L459.36,786.69 L460.37,789.60 L461.43,792.50 L462.55,795.39 L463.73,798.27 L464.96,801.14 L466.25,804.01 L467.60,806.86 L469.00,809.71 L470.46,812.54 L471.98,815.36 L473.56,818.17 L475.18,820.97 L476.87,823.76 L478.61,826.53 L480.41,829.28 L482.26,832.02 L484.16,834.75 L486.12,837.46 L488.14,840.15 L490.21,842.83 L492.33,845.49 L494.51,848.13 L496.74,850.75 L499.02,853.35 L501.36,855.94 L503.75,858.50 L506.19,861.04 L508.68,863.56 L511.22,866.06 L513.82,868.53 L516.46,870.98 L519.15,873.41 L521.90,875.82 L524.69,878.20 L527.53,880.55 L530.42,882.88 L533.36,885.18 L536.34,887.45 L539.37,889.70 L542.45,891.92 L545.57,894.11 L548.74,896.28 L551.95,898.41 L555.20,900.51 L558.50,902.58 L561.84,904.63 L565.22,906.64 L568.65,908.62 L572.11,910.56 L575.62,912.48 L579.16,914.36 L582.75,916.21 L586.37,918.02 L590.03,919.80 L593.72,921.55 L597.46,923.26 L601.22,924.93 L605.02,926.57 L608.86,928.17 L612.73,929.74 L616.63,931.27 L620.56,932.76 L624.52,934.21 L628.52,935.62 L632.54,937.00 L636.59,938.34 L640.67,939.64 L644.77,940.89 L648.90,942.11 L653.06,943.29 L657.24,944.43 L661.44,945.53 L665.66,946.58 L669.91,947.60 L674.18,948.58 L678.46,949.51 L682.77,950.40 L687.09,951.25 L691.44,952.05 L695.79,952.82 L700.17,953.54 L704.55,954.22 L708.95,954.85 L713.37,955.45 L717.79,955.99 L722.23,956.50 L726.67,956.96 L731.13,957.38 L735.59,957.75 L740.06,958.08 L744.53,958.37 L749.01,958.61 L753.49,958.81 L757.98,958.97 L762.47,959.08 L766.96,959.14 L771.45,959.16 L775.94,959.14 L780.43,959.07 L784.91,958.96 L789.39,958.81 L793.87,958.61 L798.34,958.36 L802.81,958.07 L807.27,957.74 L811.72,957.37 L816.16,956.95 L820.59,956.48 L825.00,955.98 L829.41,955.43 L833.81,954.83 L838.19,954.20 L842.55,953.52 L846.90,952.80 L851.23,952.03 L855.55,951.22 L859.84,950.37 L864.12,949.48 L868.38,948.55 L872.61,947.57 L876.83,946.55 L881.02,945.50 L885.19,944.40 L889.33,943.26 L893.45,942.08 L897.54,940.86 L901.60,939.60 L905.64,938.30 L909.64,936.96 L913.62,935.58 L917.57,934.17 L921.48,932.71 L925.37,931.22 L929.22,929.69 L933.04,928.13 L936.82,926.52 L940.57,924.88 L944.28,923.21 L947.96,921.50 L951.60,919.75 L955.20,917.97 L958.76,916.16 L962.29,914.31 L965.77,912.43 L969.22,910.51 L972.62,908.56 L975.98,906.58 L979.30,904.57 L982.57,902.53 L985.80,900.45 L988.99,898.35 L992.13,896.22 L995.23,894.05 L998.28,891.86 L1001.29,889.64 L1004.25,887.39 L1007.16,885.12 L1010.02,882.82 L1012.83,880.49 L1015.60,878.13 L1018.31,875.75 L1020.98,873.35 L1023.60,870.92 L1026.16,868.47 L1028.68,866.00 L1031.14,863.50 L1033.55,860.98 L1035.91,858.44 L1038.21,855.87 L1040.47,853.29 L1042.67,850.69 L1044.81,848.07 L1046.91,845.43 L1048.94,842.77 L1050.93,840.09 L1052.86,837.40 L1054.73,834.69 L1056.55,831.96 L1058.31,829.22 L1060.02,826.46 L1061.67,823.69 L1063.27,820.91 L1064.81,818.11 L1066.29,815.30 L1067.72,812.48 L1069.09,809.64 L1070.40,806.80 L1071.66,803.95 L1072.86,801.08 L1074.00,798.21 L1075.09,795.33 L1076.12,792.44 L1077.09,789.54 L1078.00,786.63 L1078.86,783.72 L1079.65,780.80 L1080.40,777.88 L1081.08,774.95 L1081.71,772.02 L1082.28,769.09 L1082.79,766.15 L1083.24,763.21 L1083.64,760.27 L1083.98,757.32 L1084.26,754.38 L1084.49,751.43 L1084.66,748.49 L1084.77,745.55 L1084.83,742.60 L1084.82,739.66 L1084.77,736.72 L1084.65,733.79 L1084.48,730.85 L1084.26,727.92 L1083.98,725.00 L1064.86,912.72 L1065.11,915.64 L1065.31,918.56 L1065.45,921.48 L1065.54,924.41 L1065.58,927.34 L1065.57,930.28 L1065.50,933.21 L1065.38,936.14 L1065.20,939.08 L1064.97,942.02 L1064.69,944.95 L1064.35,947.89 L1063.96,950.82 L1063.52,953.75 L1063.02,956.68 L1062.47,959.60 L1061.86,962.52 L1061.20,965.43 L1060.48,968.35 L1059.71,971.25 L1058.88,974.15 L1058.00,977.04 L1057.07,979.93 L1056.08,982.81 L1055.04,985.67 L1053.95,988.54 L1052.80,991.39 L1051.60,994.23 L1050.34,997.06 L1049.03,999.88 L1047.67,1002.69 L1046.25,1005.48 L1044.78,1008.27 L1043.26,1011.04 L1041.68,1013.79 L1040.05,1016.53 L1038.37,1019.26 L1036.64,1021.97 L1034.85,1024.66 L1033.02,1027.34 L1031.13,1030.00 L1029.19,1032.65 L1027.20,1035.27 L1025.16,1037.88 L1023.07,1040.47 L1020.92,1043.03 L1018.73,1045.58 L1016.49,1048.10 L1014.20,1050.61 L1011.86,1053.09 L1009.48,1055.55 L1007.04,1057.98 L1004.56,1060.40 L1002.03,1062.78 L999.45,1065.15 L996.83,1067.48 L994.16,1069.80 L991.45,1072.08 L988.69,1074.34 L985.88,1076.57 L983.03,1078.78 L980.14,1080.95 L977.21,1083.10 L974.23,1085.22 L971.21,1087.31 L968.15,1089.37 L965.05,1091.39 L961.91,1093.39 L958.73,1095.35 L955.51,1097.29 L952.25,1099.19 L948.95,1101.05 L945.61,1102.89 L942.24,1104.69 L938.84,1106.46 L935.39,1108.19 L931.92,1109.88 L928.40,1111.55 L924.86,1113.17 L921.28,1114.76 L917.67,1116.31 L914.03,1117.83 L910.36,1119.31 L906.66,1120.75 L902.93,1122.15 L899.17,1123.52 L895.38,1124.85 L891.57,1126.14 L887.73,1127.38 L883.86,1128.59 L879.97,1129.76 L876.06,1130.89 L872.12,1131.98 L868.16,1133.03 L864.18,1134.04 L860.18,1135.01 L856.16,1135.93 L852.12,1136.82 L848.06,1137.66 L843.99,1138.46 L839.90,1139.22 L835.79,1139.93 L831.67,1140.61 L827.53,1141.24 L823.38,1141.83 L819.22,1142.37 L815.05,1142.87 L810.87,1143.33 L806.68,1143.75 L802.48,1144.12 L798.27,1144.45 L794.05,1144.74 L789.83,1144.98 L785.61,1145.18 L781.38,1145.33 L777.14,1145.44 L772.91,1145.51 L768.67,1145.53 L764.43,1145.51 L760.19,1145.44 L755.96,1145.34 L751.72,1145.18 L747.49,1144.99 L743.26,1144.75 L739.04,1144.46 L734.82,1144.14 L730.61,1143.77 L726.40,1143.35 L722.21,1142.89 L718.02,1142.39 L713.85,1141.85 L709.68,1141.26 L705.53,1140.63 L701.38,1139.96 L697.26,1139.25 L693.14,1138.49 L689.04,1137.69 L684.96,1136.85 L680.90,1135.97 L676.85,1135.04 L672.82,1134.08 L668.81,1133.07 L664.82,1132.03 L660.85,1130.94 L656.90,1129.81 L652.98,1128.64 L649.08,1127.43 L645.20,1126.19 L641.35,1124.90 L637.53,1123.57 L633.73,1122.21 L629.95,1120.81 L626.21,1119.37 L622.50,1117.89 L618.81,1116.37 L615.15,1114.82 L611.53,1113.23 L607.94,1111.61 L604.38,1109.95 L600.85,1108.25 L597.36,1106.52 L593.90,1104.76 L590.47,1102.96 L587.08,1101.13 L583.73,1099.26 L580.42,1097.36 L577.14,1095.43 L573.90,1093.46 L570.70,1091.47 L567.54,1089.44 L564.42,1087.39 L561.34,1085.30 L558.30,1083.18 L555.30,1081.03 L552.35,1078.86 L549.44,1076.66 L546.57,1074.43 L543.74,1072.17 L540.96,1069.88 L538.22,1067.57 L535.53,1065.23 L532.89,1062.87 L530.29,1060.48 L527.74,1058.07 L525.23,1055.64 L522.77,1053.18 L520.36,1050.70 L518.00,1048.19 L515.68,1045.67 L513.42,1043.12 L511.20,1040.56 L509.03,1037.97 L506.92,1035.36 L504.85,1032.74 L502.83,1030.10 L500.87,1027.44 L498.95,1024.76 L497.09,1022.06 L495.28,1019.35 L493.52,1016.63 L491.81,1013.88 L490.15,1011.13 L488.55,1008.36 L487.00,1005.58 L485.50,1002.78 L484.06,999.97 L482.66,997.15 L481.33,994.32 L480.04,991.48 L478.81,988.63 L477.63,985.77 L476.51,982.90 L475.44,980.02 L474.42,977.13 L473.46,974.24 L472.55,971.34 L471.69,968.44 L470.89,965.53 L470.15,962.61 L469.45,959.69 L468.82,956.76 L468.23,953.84 L467.70,950.91 L467.23,947.97 L466.80,945.04 L466.44,942.10 L466.12,939.17 L465.86,936.23 L465.66,933.30 L465.50,930.36 L465.40,927.43 L465.36,924.50 L465.37,921.57 L465.43,918.64 L465.54,915.72 L465.71,912.80 L465.93,909.89 L466.20,906.98 L466.53,904.08Z" fill="url(#gout)"/>
<path d="M979.78,576.47 L975.82,574.01 L971.81,571.59 L967.74,569.22 L963.62,566.90 L959.44,564.63 L955.22,562.41 L950.95,560.24 L946.63,558.12 L942.27,556.05 L937.85,554.03 L933.40,552.06 L928.90,550.15 L924.36,548.29 L919.78,546.48 L915.16,544.73 L910.51,543.03 L905.81,541.38 L901.08,539.79 L896.32,538.25 L891.53,536.77 L886.70,535.34 L881.84,533.97 L876.96,532.66 L872.04,531.40 L867.10,530.20 L862.14,529.06 L857.15,527.97 L852.14,526.94 L847.10,525.97 L842.05,525.05 L836.98,524.20 L831.89,523.40 L826.78,522.66 L821.66,521.98 L816.53,521.35 L811.38,520.79 L806.23,520.28 L801.06,519.84 L795.89,519.45 L790.71,519.12 L785.52,518.85 L780.33,518.64 L775.13,518.49 L769.94,518.40 L764.74,518.36 L759.54,518.39 L754.35,518.48 L749.16,518.62 L743.98,518.82 L738.80,519.09 L733.62,519.41 L728.46,519.79 L723.31,520.23 L718.17,520.73 L713.04,521.29 L707.92,521.91 L702.82,522.58 L697.74,523.32 L692.67,524.11 L687.62,524.96 L682.60,525.87 L677.59,526.83 L672.61,527.86 L667.65,528.94 L662.72,530.07 L657.81,531.27 L652.93,532.52 L648.09,533.83 L643.27,535.19 L638.48,536.61 L633.73,538.09 L629.01,539.62 L624.33,541.21 L619.68,542.85 L615.07,544.54 L610.50,546.29 L605.98,548.09 L601.49,549.95 L597.05,551.86 L592.65,553.82 L588.30,555.83 L583.99,557.89 L579.73,560.01 L575.52,562.18 L571.36,564.39 L567.25,566.66 L563.20,568.97 L559.20,571.34 L555.25,573.75 L551.37,576.21 L547.53,578.72 L543.76,581.27 L540.05,583.87 L536.39,586.51 L532.80,589.20 L529.28,591.94 L525.81,594.71 L522.42,597.53 L519.08,600.39 L515.82,603.30 L512.62,606.24 L509.50,609.23 L506.44,612.25 L503.46,615.31 L500.55,618.41 L497.71,621.55 L494.95,624.73 L492.26,627.94 L489.65,631.18 L487.12,634.46 L484.66,637.77 L482.29,641.11 L479.99,644.49 L477.78,647.90 L475.65,651.33 L473.60,654.80 L471.64,658.29 L469.76,661.81 L467.96,665.36 L466.25,668.93 L464.63,672.53 L463.10,676.14 L461.65,679.79 L460.30,683.45 L459.03,687.13 L457.85,690.83 L456.77,694.55 L455.78,698.29 L454.88,702.04 L454.07,705.81 L453.35,709.59 L452.73,713.39 L452.21,717.20 L451.77,721.02 L451.44,724.84 L451.20,728.68 L451.05,732.52 L451.00,736.37 L451.05,740.22 L451.20,744.08 L451.44,747.94 L451.78,751.80 L452.22,755.67 L452.76,759.53 L453.39,763.39 L454.13,767.24 L454.96,771.09 L455.89,774.94 L456.92,778.77 L458.04,782.60 L459.27,786.42 L460.59,790.23 L462.01,794.03 L463.53,797.81 L465.15,801.58 L466.87,805.33 L468.68,809.06 L470.59,812.78 L472.60,816.48 L474.70,820.15 L476.90,823.80 L479.19,827.43 L481.58,831.04 L484.07,834.62 L486.65,838.17 L489.32,841.69 L492.08,845.18 L494.94,848.64 L497.89,852.07 L500.93,855.47 L504.06,858.83 L507.28,862.15 L510.58,865.44 L513.98,868.69 L517.46,871.89 L521.03,875.06 L524.68,878.18 L528.41,881.26 L532.23,884.30 L536.12,887.29 L540.10,890.24 L544.16,893.13 L548.29,895.98 L552.51,898.77 L556.79,901.52 L561.15,904.21 L565.58,906.85 L570.09,909.43 L574.66,911.96 L579.30,914.43 L584.01,916.85 L588.78,919.20 L593.62,921.50 L598.52,923.74 L603.48,925.91 L608.50,928.02 L613.57,930.07 L618.70,932.06 L623.88,933.98 L629.12,935.83 L634.40,937.62 L639.73,939.34 L645.11,941.00 L650.54,942.58 L656.00,944.10 L661.51,945.55 L667.05,946.92 L672.63,948.23 L678.25,949.46 L683.90,950.62 L689.58,951.71 L695.28,952.73 L701.02,953.67 L706.77,954.54 L712.55,955.34 L718.36,956.06 L724.17,956.71 L730.01,957.28 L735.86,957.77 L741.72,958.20 L747.59,958.54 L753.47,958.81 L759.35,959.00 L765.23,959.12 L771.12,959.16 L777.01,959.13 L782.89,959.02 L788.77,958.83 L794.64,958.57 L800.50,958.23 L806.35,957.81 L812.18,957.33 L818.00,956.76 L823.80,956.12 L829.58,955.41 L835.34,954.62 L841.07,953.75 L846.77,952.82 L852.45,951.81 L858.10,950.72 L863.71,949.57 L869.29,948.34 L874.84,947.04 L880.34,945.67 L885.80,944.23 L891.23,942.72 L896.60,941.14 L901.93,939.49 L907.22,937.78 L912.45,935.99 L917.63,934.15 L922.76,932.23 L927.83,930.25 L932.84,928.21 L937.80,926.10 L942.69,923.93 L947.53,921.70 L952.30,919.41 L957.00,917.06 L961.64,914.65 L966.21,912.19 L970.71,909.66 L975.14,907.08 L979.49,904.45 L983.77,901.76 L987.98,899.02 L992.11,896.23 L996.16,893.39 L1000.14,890.50 L1004.03,887.56 L1007.84,884.58 L1011.57,881.54 L1015.21,878.47 L1018.77,875.35 L1022.25,872.18 L1025.63,868.98 L1028.93,865.74 L1032.14,862.46 L1035.27,859.14 L1038.30,855.78 L1041.24,852.39 L1044.09,848.96 L1046.84,845.51 L1049.51,842.02 L1052.08,838.50 L1054.55,834.95 L1056.93,831.37 L1059.22,827.77 L1061.41,824.15 L1063.50,820.50 L1065.50,816.82 L1067.40,813.13 L1069.20,809.42 L1070.90,805.68 L1072.51,801.93 L1074.02,798.17 L1075.43,794.39 L1076.74,790.59 L1077.95,786.79 L1079.07,782.97 L1080.08,779.14 L1081.00,775.30 L1081.82,771.46 L1082.54,767.61 L1083.16,763.76 L1083.68,759.90 L1084.11,756.04 L1084.44,752.18 L1084.67,748.32 L1084.80,744.46 L1084.83,740.60 L1084.77,736.75 L1084.61,732.90 L1084.35,729.06 L1084.00,725.22 L1083.55,721.39 L1083.01,717.57 L1082.38,713.77 L1081.65,709.97 L1080.82,706.19 L1079.90,702.42 L1078.89,698.66 L1077.79,694.93 L1076.60,691.20 L1075.32,687.50 L1073.94,683.82 L1072.48,680.15 L1070.93,676.51 L1069.29,672.89 L1067.57,669.29 L1065.76,665.72 L1063.86,662.17 L1061.88,658.65 L1059.81,655.15 L1057.66,651.69 L1055.43,648.25 L1053.12,644.84 L1050.73,641.46 L1048.26,638.11 L1045.71,634.80 L1043.08,631.52 L1040.38,628.27 L1037.60,625.06 L1034.74,621.88 L1031.82,618.74 L1028.82,615.63 L1025.74,612.57 L1022.60,609.54 L1019.39,606.55 L1016.11,603.60 L1012.76,600.70 L1009.35,597.83 L1005.87,595.01 L1002.32,592.23 L998.72,589.49 L995.05,586.79 L991.32,584.15 L987.53,581.54 L983.69,578.98Z M957.75,596.53 L961.11,598.79 L964.43,601.09 L967.69,603.43 L970.90,605.81 L974.05,608.23 L977.15,610.69 L980.18,613.18 L983.16,615.72 L986.08,618.28 L988.94,620.89 L991.74,623.52 L994.48,626.19 L997.16,628.90 L999.77,631.64 L1002.31,634.41 L1004.80,637.21 L1007.21,640.04 L1009.56,642.90 L1011.84,645.79 L1014.05,648.71 L1016.19,651.66 L1018.26,654.64 L1020.26,657.64 L1022.18,660.66 L1024.04,663.71 L1025.82,666.79 L1027.52,669.88 L1029.15,673.00 L1030.71,676.14 L1032.19,679.31 L1033.59,682.49 L1034.92,685.69 L1036.16,688.90 L1037.33,692.14 L1038.42,695.39 L1039.43,698.65 L1040.36,701.93 L1041.21,705.22 L1041.98,708.53 L1042.66,711.84 L1043.26,715.17 L1043.78,718.50 L1044.22,721.85 L1044.57,725.20 L1044.84,728.55 L1045.03,731.92 L1045.13,735.28 L1045.15,738.65 L1045.08,742.03 L1044.93,745.40 L1044.69,748.77 L1044.37,752.15 L1043.96,755.52 L1043.46,758.88 L1042.88,762.25 L1042.22,765.61 L1041.46,768.96 L1040.62,772.31 L1039.70,775.64 L1038.69,778.97 L1037.59,782.29 L1036.41,785.59 L1035.15,788.89 L1033.79,792.16 L1032.36,795.43 L1030.83,798.68 L1029.23,801.91 L1027.54,805.12 L1025.76,808.31 L1023.90,811.49 L1021.96,814.64 L1019.93,817.77 L1017.83,820.88 L1015.64,823.96 L1013.37,827.01 L1011.01,830.04 L1008.58,833.04 L1006.07,836.01 L1003.48,838.95 L1000.81,841.86 L998.06,844.74 L995.24,847.59 L992.34,850.40 L989.36,853.17 L986.32,855.91 L983.19,858.62 L980.00,861.28 L976.73,863.90 L973.39,866.49 L969.98,869.03 L966.50,871.53 L962.96,873.99 L959.35,876.40 L955.67,878.77 L951.93,881.09 L948.12,883.37 L944.25,885.60 L940.32,887.78 L936.34,889.91 L932.29,891.99 L928.19,894.02 L924.03,896.00 L919.81,897.92 L915.55,899.79 L911.23,901.61 L906.86,903.37 L902.44,905.08 L897.98,906.73 L893.47,908.33 L888.92,909.86 L884.32,911.34 L879.68,912.76 L875.00,914.13 L870.29,915.43 L865.54,916.67 L860.75,917.85 L855.94,918.97 L851.09,920.03 L846.21,921.02 L841.30,921.96 L836.37,922.83 L831.41,923.63 L826.43,924.38 L821.43,925.06 L816.41,925.67 L811.37,926.22 L806.32,926.71 L801.26,927.13 L796.18,927.49 L791.09,927.78 L785.99,928.00 L780.89,928.17 L775.78,928.26 L770.67,928.29 L765.56,928.25 L760.45,928.15 L755.35,927.99 L750.24,927.76 L745.15,927.46 L740.06,927.10 L734.98,926.67 L729.91,926.18 L724.86,925.62 L719.82,925.00 L714.80,924.31 L709.80,923.56 L704.82,922.75 L699.86,921.87 L694.93,920.94 L690.02,919.93 L685.14,918.87 L680.29,917.75 L675.47,916.56 L670.68,915.31 L665.93,914.01 L661.21,912.64 L656.53,911.21 L651.90,909.73 L647.30,908.19 L642.74,906.59 L638.23,904.93 L633.76,903.22 L629.34,901.45 L624.97,899.63 L620.65,897.75 L616.38,895.82 L612.16,893.84 L608.00,891.80 L603.89,889.72 L599.84,887.58 L595.85,885.40 L591.92,883.16 L588.05,880.88 L584.24,878.56 L580.49,876.18 L576.81,873.77 L573.19,871.30 L569.64,868.80 L566.16,866.25 L562.74,863.66 L559.40,861.03 L556.13,858.37 L552.92,855.66 L549.79,852.92 L546.74,850.14 L543.76,847.32 L540.85,844.48 L538.02,841.59 L535.27,838.68 L532.59,835.74 L529.99,832.76 L527.47,829.76 L525.03,826.73 L522.67,823.67 L520.39,820.58 L518.20,817.48 L516.08,814.34 L514.05,811.19 L512.09,808.01 L510.23,804.82 L508.44,801.60 L506.74,798.37 L505.12,795.12 L503.59,791.85 L502.14,788.57 L500.78,785.28 L499.50,781.97 L498.31,778.65 L497.21,775.32 L496.19,771.98 L495.25,768.64 L494.40,765.28 L493.64,761.92 L492.96,758.56 L492.37,755.19 L491.86,751.82 L491.44,748.44 L491.10,745.07 L490.85,741.70 L490.68,738.32 L490.60,734.95 L490.61,731.59 L490.70,728.22 L490.87,724.87 L491.13,721.52 L491.47,718.17 L491.89,714.84 L492.40,711.51 L492.99,708.20 L493.66,704.89 L494.41,701.60 L495.25,698.32 L496.16,695.06 L497.16,691.81 L498.23,688.58 L499.38,685.36 L500.62,682.17 L501.93,678.99 L503.32,675.83 L504.78,672.69 L506.32,669.57 L507.94,666.47 L509.63,663.40 L511.40,660.35 L513.24,657.33 L515.15,654.33 L517.13,651.36 L519.19,648.41 L521.31,645.50 L523.51,642.61 L525.78,639.75 L528.11,636.92 L530.51,634.12 L532.97,631.35 L535.51,628.62 L538.10,625.92 L540.76,623.25 L543.49,620.61 L546.27,618.01 L549.12,615.45 L552.03,612.92 L554.99,610.43 L558.02,607.98 L561.10,605.56 L564.24,603.19 L567.43,600.85 L570.68,598.55 L573.98,596.29 L577.34,594.07 L580.74,591.90 L584.20,589.76 L587.71,587.67 L591.26,585.62 L594.86,583.62 L598.51,581.65 L602.20,579.74 L605.94,577.86 L609.72,576.03 L613.54,574.25 L617.41,572.51 L621.31,570.82 L625.25,569.18 L629.23,567.58 L633.25,566.03 L637.30,564.52 L641.38,563.07 L645.50,561.66 L649.65,560.31 L653.84,559.00 L658.05,557.74 L662.29,556.53 L666.56,555.37 L670.85,554.25 L675.17,553.19 L679.52,552.18 L683.88,551.22 L688.27,550.32 L692.68,549.46 L697.11,548.65 L701.56,547.90 L706.02,547.19 L710.50,546.54 L715.00,545.94 L719.51,545.39 L724.03,544.90 L728.56,544.46 L733.11,544.06 L737.66,543.73 L742.22,543.44 L746.78,543.21 L751.36,543.02 L755.93,542.90 L760.51,542.82 L765.09,542.80 L769.68,542.82 L774.26,542.91 L778.84,543.04 L783.42,543.23 L787.99,543.47 L792.56,543.76 L797.12,544.10 L801.67,544.50 L806.22,544.95 L810.76,545.45 L815.28,546.00 L819.79,546.61 L824.29,547.27 L828.78,547.98 L833.25,548.74 L837.70,549.55 L842.13,550.41 L846.55,551.33 L850.94,552.29 L855.32,553.31 L859.67,554.37 L863.99,555.49 L868.30,556.65 L872.57,557.87 L876.82,559.13 L881.04,560.45 L885.23,561.81 L889.39,563.22 L893.52,564.68 L897.61,566.19 L901.67,567.75 L905.70,569.35 L909.69,571.00 L913.64,572.69 L917.55,574.44 L921.43,576.22 L925.26,578.06 L929.05,579.94 L932.80,581.86 L936.50,583.83 L940.16,585.84 L943.78,587.89 L947.34,589.99 L950.86,592.12 L954.33,594.31Z" fill="#00cf00" fill-rule="evenodd"/>
<line x1="769.7" y1="1250.7" x2="859.6" y2="1178.3" stroke="#ffffff" stroke-width="2.30"/>
<line x1="769.7" y1="1250.7" x2="678.0" y2="1178.2" stroke="#ffffff" stroke-width="2.30"/>
<line x1="769.7" y1="1250.7" x2="770.3" y2="1215.4" stroke="#ffffff" stroke-width="2.30"/>
<line x1="772.7" y1="1065.5" x2="867.8" y2="992.3" stroke="#ffffff" stroke-width="2.30"/>
<line x1="772.7" y1="1065.5" x2="675.4" y2="992.2" stroke="#ffffff" stroke-width="2.30"/>
<line x1="772.7" y1="1065.5" x2="772.0" y2="1104.3" stroke="#ffffff" stroke-width="2.30"/>
<line x1="341.6" y1="912.5" x2="431.1" y2="851.6" stroke="#ffffff" stroke-width="2.30"/>
<line x1="341.6" y1="912.5" x2="421.4" y2="975.6" stroke="#ffffff" stroke-width="2.30"/>
<line x1="341.6" y1="912.5" x2="337.6" y2="876.6" stroke="#ffffff" stroke-width="2.30"/>
<line x1="320.4" y1="724.8" x2="415.2" y2="663.8" stroke="#ffffff" stroke-width="2.30"/>
<line x1="320.4" y1="724.8" x2="404.4" y2="788.0" stroke="#ffffff" stroke-width="2.30"/>
<line x1="320.4" y1="724.8" x2="324.8" y2="764.0" stroke="#ffffff" stroke-width="2.30"/>
<line x1="1189.0" y1="913.0" x2="1110.8" y2="976.0" stroke="#ffffff" stroke-width="2.30"/>
<line x1="1189.0" y1="913.0" x2="1097.9" y2="852.0" stroke="#ffffff" stroke-width="2.30"/>
<line x1="1189.0" y1="913.0" x2="1193.9" y2="877.1" stroke="#ffffff" stroke-width="2.30"/>
<line x1="1215.0" y1="725.3" x2="1132.9" y2="788.5" stroke="#ffffff" stroke-width="2.30"/>
<line x1="1215.0" y1="725.3" x2="1118.5" y2="664.2" stroke="#ffffff" stroke-width="2.30"/>
<line x1="1215.0" y1="725.3" x2="1209.6" y2="764.5" stroke="#ffffff" stroke-width="2.30"/>
<line x1="763.6" y1="439.7" x2="680.8" y2="492.9" stroke="#ffffff" stroke-width="2.30"/>
<line x1="763.6" y1="439.7" x2="847.9" y2="493.1" stroke="#ffffff" stroke-width="2.30"/>
<line x1="763.6" y1="439.7" x2="763.2" y2="478.6" stroke="#ffffff" stroke-width="2.30"/>
<path d="M352,55 H1088 V108.5 Q1088,112.5 1084,112.5 H356 Q352,112.5 352,108.5 Z" fill="#000" fill-opacity="0.445"/>
<g stroke="#f2f2f2" stroke-width="1.9" fill="none" stroke-linejoin="round"><path d="M365,78 H389 V100 H365 Z M365,78 L376,68 H398 L389,78 M398,68 V89"/><circle cx="389.5" cy="93.5" r="6.8" fill="#6a6a6a"/><path d="M389.5,89.5 V97.5 M385.5,93.5 H393.5"/></g>
<g stroke="#f2f2f2" stroke-width="1.9" fill="none" stroke-linejoin="round" stroke-dasharray="3,2.4"><path d="M413,78 H437 M413,78 V100 H430 M413,78 L424,68 H446 L437,78 M446,68 V86 M437,78 V86"/></g><g stroke="#f2f2f2" stroke-width="1.9" fill="none" stroke-linejoin="round"><circle cx="438.5" cy="93.5" r="6.8" fill="#6a6a6a"/><path d="M434.5,93.5 H442.5"/></g>
<g stroke="#f2f2f2" stroke-width="1.9" fill="none" stroke-linejoin="round"><path d="M463.5,70.5 H491 V73 H463.5 Z M473,70.5 V68 H481.5 V70.5 M464.5,76 H490 L487.5,100 H467 Z"/></g>
<g stroke="#f2f2f2" stroke-width="1.9" fill="none" stroke-linejoin="round"><rect x="508.8" y="67.8" width="32.4" height="32.4"/><rect x="513.5" y="72.5" width="23" height="8.5"/><rect x="513.5" y="86" width="7.2" height="9"/><rect x="524.5" y="86" width="12" height="9"/></g>
<g stroke="#f2f2f2" stroke-width="1.9" fill="none" stroke-linejoin="round"><path d="M555.5,70.5 V67.5 H559 M587,67.5 H590.5 V70.5 M590.5,97 V100 H587 M559,100 H555.5 V97"/><rect x="560.5" y="71.5" width="25" height="10"/><rect x="561" y="86.5" width="7.5" height="9"/><rect x="573" y="86.5" width="12.5" height="9"/></g>
<g stroke="#f2f2f2" stroke-width="1.9" fill="none" stroke-linejoin="round"><path d="M616,68 H630 L634,72 V76 M616,68 V90 H629"/><path d="M629,77 H643 L648,82 V100 H629 Z"/><path d="M638.5,83 L643,85.8 V91 L638.5,93.6 L634,91 V85.8 Z"/><path d="M626,74 L622,76.2 V81 L626,83"/></g>
<g stroke="#8c8c8c" stroke-width="1.9" fill="none" stroke-linejoin="round"><path d="M664,70 H696 M664,70 V95 H675 M680,67.5 H686 V72 H680 Z M696,70 V76"/><path d="M677.5,77 H691 L696.5,82 V100 H677.5 Z"/><path d="M687,83 L691.5,85.8 V91 L687,93.6 L682.5,91 V85.8 Z"/></g>
<g stroke="#f2f2f2" stroke-width="1.9" fill="none"><circle cx="739" cy="84" r="16" stroke-dasharray="3.2,2.6"/><path d="M739,75 V93 M730,84 H748"/></g>
<g stroke="#8c8c8c" stroke-width="1.9" fill="none"><circle cx="787" cy="84" r="16" stroke-dasharray="3.2,2.6"/><path d="M778,84 H796"/></g>
<g stroke="#8c8c8c" stroke-width="1.9" fill="none" stroke-linejoin="round"><path d="M830.5,90 V68.5 H853 V77"/><rect x="839" y="77" width="23" height="22.5"/><rect x="846" y="82" width="9" height="12.5" rx="3"/></g>
<g stroke="#8c8c8c" stroke-width="1.9" fill="none" stroke-linejoin="round"><path d="M878,90 V68.5 H901 V77"/><rect x="887" y="77" width="23" height="22.5"/><path d="M893.5,95 V82 H899 Q903.5,82 903.5,86 Q903.5,90 899,90 H893.5"/></g>
<g fill="#ffffff"><rect x="937.4" y="67.8" width="31.5" height="1.8"/><rect x="937.4" y="71.5" width="31.5" height="2.6"/><rect x="937.4" y="75.8" width="31.5" height="3.2"/><rect x="937.4" y="80.6" width="31.5" height="3.6"/><rect x="937.4" y="85.8" width="31.5" height="4.0"/><rect x="937.4" y="91.4" width="31.5" height="4.4"/><rect x="937.4" y="97.2" width="31.5" height="4.6"/></g>
<g stroke="#f2f2f2" stroke-width="2" fill="none" stroke-linecap="round" stroke-linejoin="round"><path d="M1003,72.5 L995,79.5 L1003,86.5 M995,79.5 H1016 Q1027,79.5 1027,87.5 Q1027,95.5 1016,95.5 H1006"/></g>
<g stroke="#8c8c8c" stroke-width="2" fill="none" stroke-linecap="round" stroke-linejoin="round"><path d="M1067,72.5 L1075,79.5 L1067,86.5 M1075,79.5 H1054 Q1043,79.5 1043,87.5 Q1043,95.5 1054,95.5 H1064"/></g>
<path d="M0,492.2 H58 Q62,492.2 62,496.2 V1085 Q62,1089 58,1089 H0 Z" fill="#000" fill-opacity="0.47"/>
<g stroke="#f2f2f2" stroke-width="1.7" fill="none" stroke-linejoin="round"><rect x="14.6" y="514.5" width="17.6" height="17"/><path d="M23.4,500.5 L27.7,507.7 H19.1 Z M23.4,545.5 L27.7,538.3 H19.1 Z M1,523 L8.5,518.7 V527.3 Z M46.5,523 L39,518.7 V527.3 Z"/></g>
<g stroke="#f2f2f2" stroke-width="1.7" fill="none" stroke-linejoin="round"><path d="M1,585 V567.5 H46.5 V584 M1,590 V612.5 H18" stroke-dasharray="3.5,3"/><rect x="19.6" y="586.6" width="27" height="26"/><path d="M7,574 L17,583" stroke-width="2.4"/><path d="M6.3,573 L12.5,573.6 L7,579 Z" fill="#f2f2f2"/></g>
<g stroke="#f2f2f2" stroke-width="1.7" fill="none" stroke-linejoin="round"><path d="M24.6,645.2 L41.6,662.2 L24.6,679.2 L7.6,662.2 Z"/><path d="M1.6,662 Q1,635.5 22,633.5 Q34,633 41,640"/><path d="M35.5,643 L46,645.5 L44.5,636 Z"/></g>
<g stroke="#f2f2f2" stroke-width="1.7" fill="none" stroke-linejoin="round"><path d="M19.5,701.5 L46.5,707.5 L40,735.5 L12.5,728.5 Z"/><rect x="1" y="742.6" width="45.6" height="3" rx="1.4"/><path d="M11,722.5 Q5.5,725 4.5,732"/><path d="M1.5,733 L8.5,733 L4.5,739 Z"/></g>
<g stroke="#f2f2f2" stroke-width="1.7" fill="none" stroke-linejoin="round"><rect x="4" y="768" width="38.8" height="17.6" rx="1.5"/><rect x="4" y="796.2" width="38.8" height="17.6" rx="1.5"/><path d="M0.5,791 H46" stroke-dasharray="4,3"/></g>
<g stroke="#f2f2f2" stroke-width="1.7" fill="none" stroke-linejoin="round"><path d="M23.4,833.5 L43.8,853.2 L23.4,873 L3,853.2 Z"/><path d="M8,862.5 V869 Q8,872 11,873.5 V883 M16,876 L23.4,880.5 L30.8,876 M23.4,880.5 V883 M38.8,862.5 V869 Q38.8,872 35.8,873.5 V883"/></g>
<g stroke="#f2f2f2" stroke-width="1.7" fill="none" stroke-linejoin="round"><path d="M23.4,902 L46,912 V937 L23.4,947.8 L1.2,937 V912 Z M1.2,912 L23.4,922 L46,912 M23.4,922 V947.8"/><path d="M34,918 L38,916.5 M36,924 L40,922 M31,929 L35,927.5 M28,935 L32,933 M31,938.5 L35,937" stroke-width="1.3"/></g>
<g stroke="#f2f2f2" stroke-width="1.7" fill="none" stroke-linejoin="round"><path d="M23.4,968.6 L46,979 V1004 L23.4,1014.8 L1.2,1004 V979 Z M1.2,979 L23.4,989 L46,979 M23.4,989 V1014.8"/></g>

<path d="M2,985.0 l4,2 l-1,-2 l5,2.3 l-1,-2 l5,2.3 l-1,-2 l5,2.3 l-1,-2 l4,2" stroke="#f2f2f2" stroke-width="0.9" fill="none" stroke-opacity="0.85"/>
<path d="M2,988.3 l4,2 l-1,-2 l5,2.3 l-1,-2 l5,2.3 l-1,-2 l5,2.3 l-1,-2 l4,2" stroke="#f2f2f2" stroke-width="0.9" fill="none" stroke-opacity="0.85"/>
<path d="M2,991.6 l4,2 l-1,-2 l5,2.3 l-1,-2 l5,2.3 l-1,-2 l5,2.3 l-1,-2 l4,2" stroke="#f2f2f2" stroke-width="0.9" fill="none" stroke-opacity="0.85"/>
<path d="M2,994.9 l4,2 l-1,-2 l5,2.3 l-1,-2 l5,2.3 l-1,-2 l5,2.3 l-1,-2 l4,2" stroke="#f2f2f2" stroke-width="0.9" fill="none" stroke-opacity="0.85"/>
<path d="M2,998.2 l4,2 l-1,-2 l5,2.3 l-1,-2 l5,2.3 l-1,-2 l5,2.3 l-1,-2 l4,2" stroke="#f2f2f2" stroke-width="0.9" fill="none" stroke-opacity="0.85"/>
<path d="M2,1001.5 l4,2 l-1,-2 l5,2.3 l-1,-2 l5,2.3 l-1,-2 l5,2.3 l-1,-2 l4,2" stroke="#f2f2f2" stroke-width="0.9" fill="none" stroke-opacity="0.85"/>
<path d="M2,1004.8 l4,2 l-1,-2 l5,2.3 l-1,-2 l5,2.3 l-1,-2 l5,2.3 l-1,-2 l4,2" stroke="#f2f2f2" stroke-width="0.9" fill="none" stroke-opacity="0.85"/>
<path d="M2,1008.1 l4,2 l-1,-2 l5,2.3 l-1,-2 l5,2.3 l-1,-2 l5,2.3 l-1,-2 l4,2" stroke="#f2f2f2" stroke-width="0.9" fill="none" stroke-opacity="0.85"/>
<g stroke="#f2f2f2" stroke-width="1.7" fill="none" stroke-linejoin="round"><rect x="4" y="1049.7" width="38.8" height="18" rx="1"/><path d="M8,1050 V1055 M12,1050 V1053.5 M16,1050 V1055 M20,1050 V1053.5 M24,1050 V1057 M28,1050 V1053.5 M32,1050 V1055 M36,1050 V1053.5" stroke-width="1.3"/></g>
<path d="M0,1453.3 H48.7 Q52.7,1453.3 52.7,1457.3 V1527 H0 Z" fill="#232323"/>
<path d="M52.7,1453.3 H119 Q123,1453.3 123,1457.3 V1527 H52.7 Z" fill="#000" fill-opacity="0.49"/>
<g stroke="#f2f2f2" stroke-width="1.8" fill="none" stroke-linejoin="round"><path d="M0,1479 H32 V1513 H0 M0,1479 L13,1467 H45 V1501 L32,1513 M32,1479 L45,1467"/></g>
<g stroke="#f2f2f2" stroke-width="1.4" fill="none" stroke-linejoin="round"><path d="M63,1480 L75,1467.5 H109 L97.5,1480 Z"/><path d="M63,1483.7 H97.5 L109,1472.7"/><path d="M63,1487.4 H97.5 L109,1476.4"/><path d="M63,1491.1 H97.5 L109,1480.1"/><path d="M63,1494.8 H97.5 L109,1483.8"/><path d="M63,1498.5 H97.5 L109,1487.5"/><path d="M63,1502.2 H97.5 L109,1491.2"/><path d="M63,1505.9 H97.5 L109,1494.9"/><path d="M63,1509.6 H97.5 L109,1498.6"/><path d="M63,1513.3 H97.5 L109,1502.3"/></g>
</svg>
<svg width="1964" height="1531" style="position:absolute;left:0;top:0" font-family="Liberation Sans, sans-serif">
<rect x="0.0" y="0.0" width="1964.0" height="55.0" fill="#333333"/>
<rect x="0.0" y="6.0" width="1964.0" height="1.0" fill="#2c2c2c"/>
<rect x="-6.0" y="14.0" width="83.0" height="35.0" fill="#fafafa" rx="5"/>
<text x="15.7" y="36.5" font-size="14.5" fill="#333333">Plater</text>
<text x="106.9" y="36.3" font-size="14.5" fill="#e6e6e6">Print Settings</text>
<text x="248.3" y="36.3" font-size="14.5" fill="#e6e6e6">Filaments</text>
<text x="366.6" y="36.3" font-size="14.5" fill="#e6e6e6">Printers</text>
<text x="470.5" y="36.3" font-size="14.5" fill="#e6e6e6">Printables</text>
<text x="589.3" y="36.3" font-size="14.5" fill="#e6e6e6">Physical Printer</text>
<rect x="1095.5" y="19.5" width="359.0" height="24.0" fill="#333333" stroke="#5a5a5a" stroke-width="1"/>
<g transform="translate(1442,30.5)"><circle cx="-1.5" cy="-1.5" r="5.2" fill="none" stroke="#e07b2e" stroke-width="2"/><line x1="2.3" y1="2.3" x2="7" y2="7" stroke="#e8e8e8" stroke-width="2.6" stroke-linecap="round"/></g>
<polygon points="1699.0,24.4 1704.7,27.7 1704.7,34.3 1699.0,37.6 1693.3,34.3 1693.3,27.7" fill="#e00000"/>
<text x="1713.4" y="35.5" font-size="14.5" fill="#e6e6e6">Expert mode</text>
<polyline points="1804.0,28.5 1809.5,33.5 1815.0,28.5" fill="none" stroke="#6a6a6a" stroke-width="1.6"/>
<circle cx="1859.7" cy="31" r="10.5" fill="none" stroke="#f0f0f0" stroke-width="1.6"/><circle cx="1859.7" cy="27.3" r="4" fill="none" stroke="#f0f0f0" stroke-width="1.6"/><path d="M1852.3,38.4 Q1859.7,29.5 1867.1,38.4" fill="none" stroke="#f0f0f0" stroke-width="1.6"/>
<text x="1878.3" y="35.5" font-size="14.5" fill="#e6e6e6">Log in</text>
<polyline points="1925.3,28.5 1930.8,33.5 1936.3,28.5" fill="none" stroke="#6a6a6a" stroke-width="1.6"/>
<rect x="1455.0" y="55.0" width="504.0" height="1472.0" fill="#2b2b2b"/>
<rect x="1959.0" y="0.0" width="2.0" height="1531.0" fill="#646e72"/>
<rect x="1961.0" y="0.0" width="3.0" height="1531.0" fill="#000000"/>
<rect x="0.0" y="1527.0" width="1961.0" height="2.0" fill="#646e72"/>
<rect x="0.0" y="1529.0" width="1964.0" height="2.0" fill="#000000"/>
<text x="1461.5" y="68.3" font-size="14.5" fill="#a3a3a3">Print settings:</text>
<rect x="1461.5" y="73.5" width="463.0" height="24.5" fill="#2e2e2e" stroke="#5b5b5b" stroke-width="1"/>
<circle cx="1476.7" cy="85.3" r="6" fill="#f4f4f4"/><circle cx="1482.15" cy="87.56" r="1.7" fill="#f4f4f4"/><circle cx="1478.96" cy="90.75" r="1.7" fill="#f4f4f4"/><circle cx="1474.44" cy="90.75" r="1.7" fill="#f4f4f4"/><circle cx="1471.25" cy="87.56" r="1.7" fill="#f4f4f4"/><circle cx="1471.25" cy="83.04" r="1.7" fill="#f4f4f4"/><circle cx="1474.44" cy="79.85" r="1.7" fill="#f4f4f4"/><circle cx="1478.96" cy="79.85" r="1.7" fill="#f4f4f4"/><circle cx="1482.15" cy="83.04" r="1.7" fill="#f4f4f4"/><circle cx="1476.7" cy="85.3" r="4.2" fill="#2b2b2b"/><circle cx="1476.7" cy="85.3" r="3.3" fill="none" stroke="#e06a1e" stroke-width="1.5"/><circle cx="1476.7" cy="85.3" r="2.2" fill="#2b2b2b"/>
<g transform="translate(1498.7,85.3) scale(1.00)"><path d="M-3.6,-1 V-4 A3.6,3.6 0 0 1 3.6,-4 V-1" fill="none" stroke="#f4f4f4" stroke-width="2.2"/><rect x="-5.6" y="-1.2" width="11.2" height="8.4" rx="1" fill="#f4f4f4"/><path d="M-1.5,3 H2.5" stroke="#2b2b2b" stroke-width="1.4"/></g>
<text x="1512.3" y="90.6" font-size="14.5" fill="#f0f0f0">0.20mm SPEED</text>
<polyline points="1906.9,82.8 1912.4,87.8 1917.9,82.8" fill="none" stroke="#6a6a6a" stroke-width="1.6"/>
<circle cx="1936.0" cy="85.3" r="6" fill="#f4f4f4"/><circle cx="1941.45" cy="87.56" r="1.7" fill="#f4f4f4"/><circle cx="1938.26" cy="90.75" r="1.7" fill="#f4f4f4"/><circle cx="1933.74" cy="90.75" r="1.7" fill="#f4f4f4"/><circle cx="1930.55" cy="87.56" r="1.7" fill="#f4f4f4"/><circle cx="1930.55" cy="83.04" r="1.7" fill="#f4f4f4"/><circle cx="1933.74" cy="79.85" r="1.7" fill="#f4f4f4"/><circle cx="1938.26" cy="79.85" r="1.7" fill="#f4f4f4"/><circle cx="1941.45" cy="83.04" r="1.7" fill="#f4f4f4"/><circle cx="1936.0" cy="85.3" r="4.2" fill="#2b2b2b"/><circle cx="1936.0" cy="85.3" r="3.3" fill="none" stroke="#e06a1e" stroke-width="1.5"/><circle cx="1936.0" cy="85.3" r="2.2" fill="#2b2b2b"/>
<text x="1461.5" y="112.3" font-size="14.5" fill="#a3a3a3">Filament:</text>
<rect x="1461.5" y="117.5" width="463.0" height="24.5" fill="#2e2e2e" stroke="#5b5b5b" stroke-width="1"/>
<rect x="1464.9" y="121.2" width="23.8" height="15.2" fill="#ff7f00" stroke="#ffffff" stroke-width="1"/>
<g transform="translate(1498.7,129.3) scale(1.00)"><path d="M-3.6,-1 V-4 A3.6,3.6 0 0 1 3.6,-4 V-1" fill="none" stroke="#f4f4f4" stroke-width="2.2"/><rect x="-5.6" y="-1.2" width="11.2" height="8.4" rx="1" fill="#f4f4f4"/><path d="M-1.5,3 H2.5" stroke="#2b2b2b" stroke-width="1.4"/></g>
<text x="1512.3" y="134.6" font-size="14.5" fill="#f0f0f0">Elegoo PLA</text>
<polyline points="1906.9,126.8 1912.4,131.8 1917.9,126.8" fill="none" stroke="#6a6a6a" stroke-width="1.6"/>
<circle cx="1936.0" cy="129.3" r="6" fill="#f4f4f4"/><circle cx="1941.45" cy="131.56" r="1.7" fill="#f4f4f4"/><circle cx="1938.26" cy="134.75" r="1.7" fill="#f4f4f4"/><circle cx="1933.74" cy="134.75" r="1.7" fill="#f4f4f4"/><circle cx="1930.55" cy="131.56" r="1.7" fill="#f4f4f4"/><circle cx="1930.55" cy="127.04" r="1.7" fill="#f4f4f4"/><circle cx="1933.74" cy="123.85" r="1.7" fill="#f4f4f4"/><circle cx="1938.26" cy="123.85" r="1.7" fill="#f4f4f4"/><circle cx="1941.45" cy="127.04" r="1.7" fill="#f4f4f4"/><circle cx="1936.0" cy="129.3" r="4.2" fill="#2b2b2b"/><circle cx="1936.0" cy="129.3" r="3.3" fill="none" stroke="#e06a1e" stroke-width="1.5"/><circle cx="1936.0" cy="129.3" r="2.2" fill="#2b2b2b"/>
<text x="1461.5" y="156.0" font-size="14.5" fill="#a3a3a3">Printer:</text>
<rect x="1461.5" y="161.5" width="463.0" height="24.5" fill="#2e2e2e" stroke="#5b5b5b" stroke-width="1"/>
<rect x="1467" y="167.5" width="13" height="11" fill="none" stroke="#f0f0f0" stroke-width="1.5"/><line x1="1467" y1="171" x2="1480" y2="171" stroke="#f0f0f0" stroke-width="1.2"/><rect x="1468.3" y="168.6" width="3" height="2.6" fill="#e0501e"/>
<text x="1502.3" y="178.3" font-size="14.5" fill="#f0f0f0">MK4 Link * Original Prusa MK4 Input Shaper 0.4 nozzle</text>
<polyline points="1906.9,170.8 1912.4,175.8 1917.9,170.8" fill="none" stroke="#6a6a6a" stroke-width="1.6"/>
<circle cx="1936.0" cy="173.3" r="6" fill="#f4f4f4"/><circle cx="1941.45" cy="175.56" r="1.7" fill="#f4f4f4"/><circle cx="1938.26" cy="178.75" r="1.7" fill="#f4f4f4"/><circle cx="1933.74" cy="178.75" r="1.7" fill="#f4f4f4"/><circle cx="1930.55" cy="175.56" r="1.7" fill="#f4f4f4"/><circle cx="1930.55" cy="171.04" r="1.7" fill="#f4f4f4"/><circle cx="1933.74" cy="167.85" r="1.7" fill="#f4f4f4"/><circle cx="1938.26" cy="167.85" r="1.7" fill="#f4f4f4"/><circle cx="1941.45" cy="171.04" r="1.7" fill="#f4f4f4"/><circle cx="1936.0" cy="173.3" r="4.2" fill="#2b2b2b"/><circle cx="1936.0" cy="173.3" r="3.3" fill="none" stroke="#e06a1e" stroke-width="1.5"/><circle cx="1936.0" cy="173.3" r="2.2" fill="#2b2b2b"/>
<text x="1463.0" y="210.2" font-size="14.5" fill="#a3a3a3">Supports:</text>
<rect x="1528.5" y="193.9" width="396.5" height="24.0" fill="#2e2e2e" stroke="#5b5b5b" stroke-width="1"/>
<text x="1532.2" y="210.6" font-size="14.5" fill="#f0f0f0">None</text>
<polyline points="1906.9,202.8 1912.4,207.8 1917.9,202.8" fill="none" stroke="#6a6a6a" stroke-width="1.6"/>
<text x="1463.0" y="237.9" font-size="14.5" fill="#a3a3a3">Infill:</text>
<rect x="1499.5" y="221.9" width="95.5" height="23.8" fill="#2e2e2e" stroke="#5b5b5b" stroke-width="1"/>
<text x="1504.2" y="238.5" font-size="14.5" fill="#f0f0f0">15%</text>
<polyline points="1576.7,230.8 1582.2,235.8 1587.7,230.8" fill="none" stroke="#6a6a6a" stroke-width="1.6"/>
<text x="1619.3" y="237.9" font-size="14.5" fill="#a3a3a3">Brim:</text>
<rect x="1659.5" y="226.5" width="13.5" height="13.2" fill="#2b2b2b" stroke="#6a6a6a" stroke-width="1"/>
<rect x="1461.8" y="253.6" width="490.7" height="917.4" fill="#2f2f2f" stroke="#222222" stroke-width="1"/>
<rect x="1462.0" y="254.0" width="490.0" height="24.0" fill="#2f2f2f"/>
<line x1="1701.2" y1="254" x2="1701.2" y2="278" stroke="#262626" stroke-width="1"/><line x1="1737.1" y1="254" x2="1737.1" y2="278" stroke="#262626" stroke-width="1"/>
<text x="1469.6" y="269.8" font-size="14.0" fill="#8a8a8a" font-weight="bold" textLength="41.9" lengthAdjust="spacingAndGlyphs">Name</text>
<text x="1818.2" y="269.8" font-size="14.0" fill="#8a8a8a" font-weight="bold" textLength="52.3" lengthAdjust="spacingAndGlyphs">Editing</text>
<rect x="1462.3" y="279.0" width="490.0" height="18.3" fill="#1753a3"/>
<text x="1482.2" y="292.2" font-size="14.5" fill="#f0f0f0">wheel.stl</text>
<g transform="translate(1719.8,287.6)"><path d="M-7,0 Q0,-6.5 7,0 Q0,6.5 -7,0Z" fill="none" stroke="#ffffff" stroke-width="1.6"/><circle cx="0" cy="0" r="2.3" fill="#ffffff"/></g>
<g transform="translate(1843.9,287.6)"><path d="M-1,-4.5 H-4.5 V5 H4.5 V1" fill="none" stroke="#ffffff" stroke-width="1.5"/><circle cx="2.8" cy="-3" r="2.4" fill="none" stroke="#ff7f2a" stroke-width="1.4"/></g>
<path d="M1624,1187.5 H1952 V1395 H1461.8 V1187.5" fill="none" stroke="#232323" stroke-width="1"/>
<text x="1466.2" y="1190.9" font-size="14.5" fill="#8e8e8e" font-weight="bold" textLength="152.6" lengthAdjust="spacingAndGlyphs">Object manipulation</text>
<rect x="1465.5" y="1199.8" width="179.5" height="24.3" fill="#2e2e2e" stroke="#5b5b5b" stroke-width="1"/>
<text x="1469.1" y="1215.7" font-size="14.5" fill="#f0f0f0">World coordinates</text>
<polyline points="1626.9,1209.0 1632.4,1214.0 1637.9,1209.0" fill="none" stroke="#6a6a6a" stroke-width="1.6"/>
<text x="1667.2" y="1216.0" font-size="14.0" fill="#8e8e8e" font-weight="bold">X</text>
<g transform="translate(1690.2,1211)"><path d="M-2.5,-5.5 H-5.5 V5.5 H-2.5 M2.5,-5.5 H5.5 V5.5 H2.5" fill="none" stroke="#0c0c0c" stroke-width="2.2"/><path d="M0,-6 V-3.5 M0,3.5 V6 M0,-1.2 V1.2" stroke="#0c0c0c" stroke-width="1.4"/></g>
<text x="1739.2" y="1216.0" font-size="14.0" fill="#8e8e8e" font-weight="bold">Y</text>
<g transform="translate(1762.2,1211)"><path d="M-2.5,-5.5 H-5.5 V5.5 H-2.5 M2.5,-5.5 H5.5 V5.5 H2.5" fill="none" stroke="#0c0c0c" stroke-width="2.2"/><path d="M0,-6 V-3.5 M0,3.5 V6 M0,-1.2 V1.2" stroke="#0c0c0c" stroke-width="1.4"/></g>
<text x="1811.2" y="1216.0" font-size="14.0" fill="#8e8e8e" font-weight="bold">Z</text>
<g transform="translate(1834.2,1211)"><path d="M-2.5,-5.5 H-5.5 V5.5 H-2.5 M2.5,-5.5 H5.5 V5.5 H2.5" fill="none" stroke="#0c0c0c" stroke-width="2.2"/><path d="M0,-6 V-3.5 M0,3.5 V6 M0,-1.2 V1.2" stroke="#0c0c0c" stroke-width="1.4"/></g>
<text x="1465.2" y="1248.5" font-size="14.5" fill="#a3a3a3">Position:</text>
<rect x="1648.6" y="1231.7" width="68.0" height="24.4" fill="#2d2d2d" stroke="#6b6b6b" stroke-width="1"/>
<text x="1653.6" y="1248.5" font-size="14.5" fill="#f0f0f0">125</text>
<rect x="1720.6" y="1231.7" width="68.0" height="24.4" fill="#2d2d2d" stroke="#6b6b6b" stroke-width="1"/>
<text x="1725.6" y="1248.5" font-size="14.5" fill="#f0f0f0">105</text>
<rect x="1792.8" y="1231.7" width="68.0" height="24.4" fill="#2d2d2d" stroke="#6b6b6b" stroke-width="1"/>
<text x="1797.8" y="1248.5" font-size="14.5" fill="#f0f0f0">32.5</text>
<text x="1864.0" y="1248.5" font-size="14.5" fill="#a3a3a3">mm</text>
<text x="1465.2" y="1285.1" font-size="14.5" fill="#a3a3a3">Rotate (relative):</text>
<rect x="1648.6" y="1268.6" width="68.0" height="24.4" fill="#2d2d2d" stroke="#6b6b6b" stroke-width="1"/>
<text x="1653.6" y="1285.1" font-size="14.5" fill="#f0f0f0">0</text>
<rect x="1720.6" y="1268.6" width="68.0" height="24.4" fill="#2d2d2d" stroke="#6b6b6b" stroke-width="1"/>
<text x="1725.6" y="1285.1" font-size="14.5" fill="#f0f0f0">0</text>
<rect x="1792.8" y="1268.6" width="68.0" height="24.4" fill="#2d2d2d" stroke="#6b6b6b" stroke-width="1"/>
<text x="1797.8" y="1285.1" font-size="14.5" fill="#f0f0f0">0</text>
<text x="1864.0" y="1282.1" font-size="12.0" fill="#a3a3a3">°</text>
<text x="1485.3" y="1322.3" font-size="14.5" fill="#a3a3a3">Scale factors:</text>
<rect x="1648.6" y="1305.7" width="68.0" height="24.4" fill="#2d2d2d" stroke="#6b6b6b" stroke-width="1"/>
<text x="1653.6" y="1322.3" font-size="14.5" fill="#f0f0f0">100</text>
<rect x="1720.6" y="1305.7" width="68.0" height="24.4" fill="#2d2d2d" stroke="#6b6b6b" stroke-width="1"/>
<text x="1725.6" y="1322.3" font-size="14.5" fill="#f0f0f0">100</text>
<rect x="1792.8" y="1305.7" width="68.0" height="24.4" fill="#2d2d2d" stroke="#6b6b6b" stroke-width="1"/>
<text x="1797.8" y="1322.3" font-size="14.5" fill="#f0f0f0">100</text>
<text x="1864.0" y="1322.3" font-size="14.5" fill="#a3a3a3">%</text>
<text x="1485.3" y="1359.4" font-size="14.5" fill="#a3a3a3">Size [World]:</text>
<rect x="1648.6" y="1342.9" width="68.0" height="24.4" fill="#2d2d2d" stroke="#6b6b6b" stroke-width="1"/>
<text x="1653.6" y="1359.4" font-size="14.5" fill="#f0f0f0">150</text>
<rect x="1720.6" y="1342.9" width="68.0" height="24.4" fill="#2d2d2d" stroke="#6b6b6b" stroke-width="1"/>
<text x="1725.6" y="1359.4" font-size="14.5" fill="#f0f0f0">150</text>
<rect x="1792.8" y="1342.9" width="68.0" height="24.4" fill="#2d2d2d" stroke="#6b6b6b" stroke-width="1"/>
<text x="1797.8" y="1359.4" font-size="14.5" fill="#f0f0f0">65</text>
<text x="1864.0" y="1359.4" font-size="14.5" fill="#a3a3a3">mm</text>
<g transform="translate(1473.0,1335.9) scale(1.00)"><path d="M-3.6,-1 V-4 A3.6,3.6 0 0 1 3.6,-4 V-1" fill="none" stroke="#f4f4f4" stroke-width="2.2"/><rect x="-5.6" y="-1.2" width="11.2" height="8.4" rx="1" fill="#f4f4f4"/><path d="M-1.5,3 H2.5" stroke="#2b2b2b" stroke-width="1.4"/></g>
<rect x="1467.5" y="1376.5" width="13.2" height="13.2" fill="#2b2b2b" stroke="#555555" stroke-width="1"/>
<text x="1484.0" y="1387.7" font-size="14.5" fill="#a3a3a3">Inches</text>
<path d="M1491.9,1411.8 H1952 V1478 H1461.8 V1411.8" fill="none" stroke="#232323" stroke-width="1"/>
<text x="1461.8" y="1414.4" font-size="14.5" fill="#8e8e8e" font-weight="bold" textLength="28.3" lengthAdjust="spacingAndGlyphs">Info</text>
<text x="1461.8" y="1431.7" font-size="14.5" fill="#a3a3a3">Size:</text>
<text x="1522.5" y="1431.7" font-size="14.5" fill="#a3a3a3">150.00 x 150.00 x 65.00</text>
<text x="1693.9" y="1431.7" font-size="14.5" fill="#a3a3a3">Volume:</text>
<text x="1763.3" y="1431.7" font-size="14.5" fill="#a3a3a3">456718.31</text>
<text x="1461.8" y="1453.6" font-size="14.5" fill="#a3a3a3">Facets:</text>
<text x="1522.5" y="1453.6" font-size="14.5" fill="#a3a3a3">2016 (1 shell)</text>
<text x="1463.0" y="1474.6" font-size="14.5" fill="#a3a3a3">No errors detected</text>
<rect x="1462.3" y="1486.3" width="490.0" height="34.0" fill="#353535" stroke="#222222" stroke-width="1.2" rx="4"/>
<text x="1671.7" y="1506.8" font-size="14.5" fill="#8a8a8a" font-weight="bold" textLength="70.7" lengthAdjust="spacingAndGlyphs">Slice now</text>
</svg>
</body></html>
